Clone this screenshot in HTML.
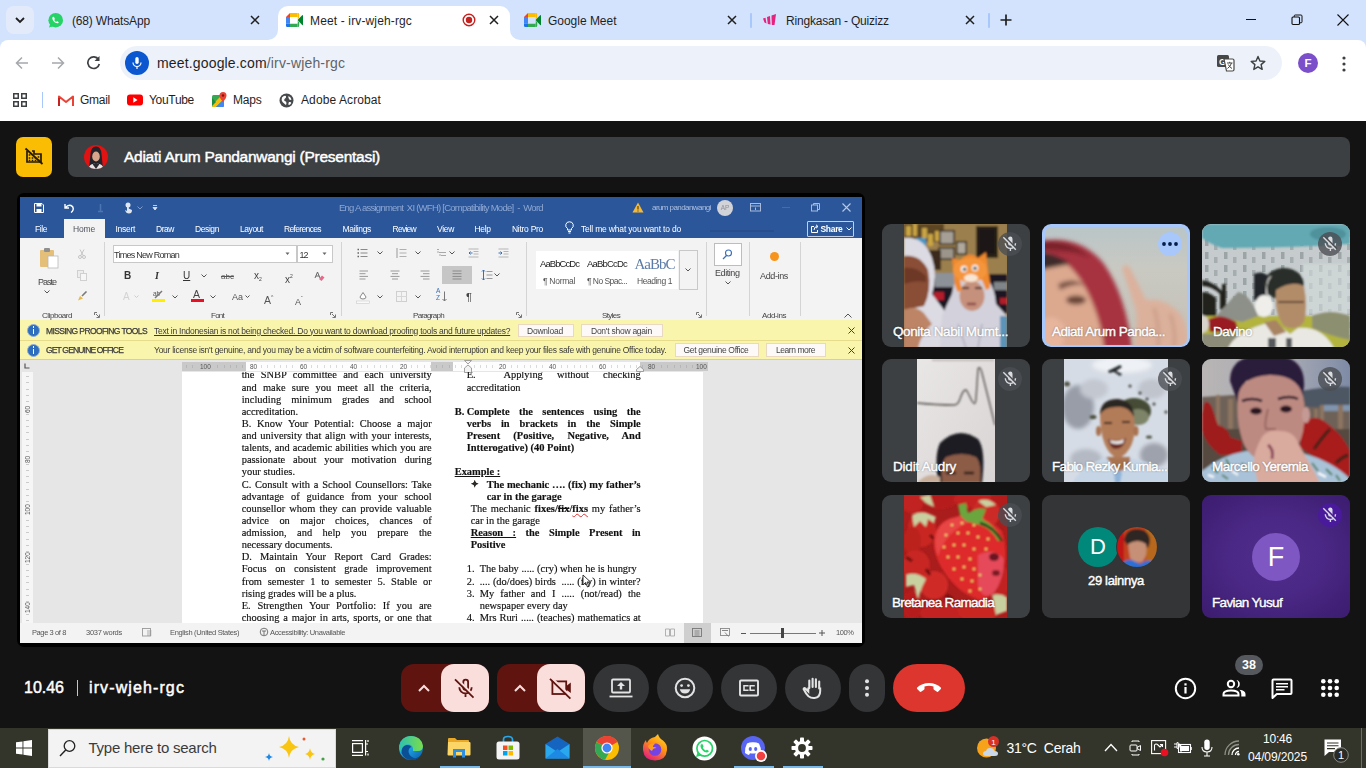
<!DOCTYPE html><html lang="id"><head>
<meta charset="utf-8">
<title>Meet - irv-wjeh-rgc</title>
<style>
*{box-sizing:border-box;margin:0;padding:0}
html,body{width:1366px;height:768px;overflow:hidden;background:#131314;font-family:"Liberation Sans",sans-serif;}
.abs{position:absolute}
#root{position:relative;width:1366px;height:768px;overflow:hidden;background:#131314}
/* ---------- chrome ---------- */
#tabstrip{left:0;top:0;width:1366px;height:52px;background:#d3e3fd}
#toolbar{left:0;top:40px;width:1366px;height:80.6px;background:#fff;border-radius:8px 8px 0 0}
.tabtxt{font-size:12px;color:#1f1f1f;white-space:nowrap;line-height:16px;margin-top:1px}
#omni{left:120px;top:46px;width:1162px;height:34px;border-radius:17px;background:#edf2fa}
.bm{font-size:12px;color:#1f1f1f;white-space:nowrap;line-height:16px;top:92px}
/* ---------- meet ---------- */
.gs{font-family:"Liberation Sans",sans-serif}
.tile{width:148px;height:123px;border-radius:9px;background:#3c4043;overflow:hidden}
.tname{left:11px;bottom:8px;color:#fff;-webkit-text-stroke:.4px #fff;font-size:13.5px;letter-spacing:-0.45px;white-space:nowrap;text-shadow:0 0 2px rgba(0,0,0,.6)}
svg{color:#4b4e52}
.mutedot{right:8px;top:8px;width:24px;height:24px;border-radius:12px;background:rgba(75,78,82,.8)}
.cbtn{top:664px;height:48px;background:#333537;border-radius:24px}
/* ---------- word ---------- */
#word{left:0;top:0;width:1366px;height:768px;clip-path:inset(197px 504px 125px 20px);font-family:"Liberation Sans",sans-serif;filter:blur(.5px)}
#word .abs{white-space:nowrap}
.wt{position:absolute;white-space:nowrap;color:#fff;font-size:8.5px;line-height:11px;margin-top:1px}
.rb{position:absolute;white-space:nowrap;color:#444;font-size:9px;line-height:10px}
.doc{position:absolute;font-family:"Liberation Serif",serif;font-size:10.45px;line-height:12.13px;-webkit-text-stroke:.15px #111;color:#111;text-align:justify;text-align-last:justify}
.doc div{height:12.13px;white-space:nowrap}
.doc div.l{text-align-last:left}
.doc .n{display:inline-block;width:13px;text-align:left;text-align-last:left}
/* ---------- taskbar ---------- */
#taskbar{left:0;top:728px;width:1366px;height:40px;background:#34352a}
</style>
</head>
<body>
<div id="root">

<!-- ================= CHROME ================= -->
<div id="tabstrip" class="abs"></div>
<div id="toolbar" class="abs"></div>
<!-- tab search button -->
<div class="abs" style="left:6px;top:6px;width:28px;height:28px;border-radius:8px;background:#e3ebfb"></div>
<svg class="abs" style="left:14px;top:15px" width="12" height="10" viewBox="0 0 12 10"><path d="M2 3 L6 7 L10 3" fill="none" stroke="#1f1f1f" stroke-width="1.8"></path></svg>
<!-- tab 1 whatsapp -->
<svg class="abs" style="left:47px;top:12px" width="17" height="17" viewBox="0 0 17 17"><circle cx="8.7" cy="8.2" r="7.3" fill="#25d366"></circle><path d="M2 15.5 L3.6 11 L7.5 14 Z" fill="#25d366"></path><path d="M6.3 4.8c-.4 0-1 .5-1 1.5 0 2 2.6 4.9 4.9 4.9 1 0 1.500-.6 1.500-1 0-.3-1.300-1-1.600-1-.3 0-.5.600-.8.600-.5 0-2-1.400-2-1.900 0-.3.500-.5.500-.9 0-.3-.6-2.200-1.500-2.200z" fill="#fff"></path></svg>
<div class="abs tabtxt" style="left: 72px; top: 12px; letter-spacing: -0.16px;">(68) WhatsApp</div>
<svg class="abs" style="left:250px;top:15px" width="10" height="10" viewBox="0 0 10 10"><path d="M1 1 L9 9 M9 1 L1 9" stroke="#1f1f1f" stroke-width="1.5"></path></svg>
<!-- active tab -->
<div class="abs" style="left:278px;top:6px;width:232px;height:34px;background:#fff;border-radius:10px 10px 0 0"></div>
<svg class="abs" style="left:268px;top:30px" width="10" height="10" viewBox="0 0 10 10"><path d="M10 0 V10 H0 A10 10 0 0 0 10 0Z" fill="#fff"></path></svg>
<svg class="abs" style="left:510px;top:30px" width="10" height="10" viewBox="0 0 10 10"><path d="M0 0 V10 H10 A10 10 0 0 1 0 0Z" fill="#fff"></path></svg>
<svg class="abs meeticon" style="left:286px;top:13px" width="17" height="14" viewBox="0 0 17 14"><path d="M0 4 L4 0 V4Z" fill="#ea4335"></path><rect x="4" y="0" width="7.500" height="4" fill="#fbbc04"></rect><rect x="0" y="4" width="4" height="6.500" fill="#4285f4"></rect><path d="M0 10.500 H4 V14 H1.200 A1.200 1.200 0 0 1 0 12.800Z" fill="#1a73e8"></path><rect x="4" y="10.500" width="7.500" height="3.500" fill="#34a853"></rect><path d="M11.500 0 H12 A1.200 1.200 0 0 1 13.200 1.200 V4.500 L11.500 7Z" fill="#fbbc04"></path><path d="M11.500 7 L16.200 2.200 Q17 1.800 17 2.800 V11.500 Q17 12.500 16.200 11.900 L11.500 7Z" fill="#00832d"></path><path d="M11.500 7 L13.200 9.500 V12.800 A1.200 1.200 0 0 1 12 14 H11.500Z" fill="#34a853"></path><rect x="4" y="4" width="7.500" height="6.500" fill="#fff"></rect></svg>
<div class="abs tabtxt" style="left: 310px; top: 12px; letter-spacing: 0.14px;">Meet - irv-wjeh-rgc</div>
<svg class="abs" style="left:462px;top:13px" width="14" height="14" viewBox="0 0 14 14"><circle cx="7" cy="7" r="5.800" fill="none" stroke="#c5221f" stroke-width="1.400"></circle><circle cx="7" cy="7" r="3.200" fill="#c5221f"></circle></svg>
<svg class="abs" style="left:489px;top:15px" width="10" height="10" viewBox="0 0 10 10"><path d="M1 1 L9 9 M9 1 L1 9" stroke="#1f1f1f" stroke-width="1.500"></path></svg>
<!-- tab 3 google meet -->
<svg class="abs meeticon" style="left:524px;top:13px" width="17" height="14" viewBox="0 0 17 14"><path d="M0 4 L4 0 V4Z" fill="#ea4335"></path><rect x="4" y="0" width="7.500" height="4" fill="#fbbc04"></rect><rect x="0" y="4" width="4" height="6.500" fill="#4285f4"></rect><path d="M0 10.500 H4 V14 H1.200 A1.200 1.200 0 0 1 0 12.800Z" fill="#1a73e8"></path><rect x="4" y="10.500" width="7.500" height="3.500" fill="#34a853"></rect><path d="M11.500 0 H12 A1.200 1.200 0 0 1 13.200 1.200 V4.500 L11.500 7Z" fill="#fbbc04"></path><path d="M11.500 7 L16.200 2.200 Q17 1.800 17 2.800 V11.500 Q17 12.500 16.200 11.900 L11.500 7Z" fill="#00832d"></path><path d="M11.500 7 L13.200 9.500 V12.800 A1.200 1.200 0 0 1 12 14 H11.500Z" fill="#34a853"></path><rect x="4" y="4" width="7.500" height="6.500" fill="#d3e3fd"></rect></svg>
<div class="abs tabtxt" style="left: 548px; top: 12px; letter-spacing: -0.02px;">Google Meet</div>
<svg class="abs" style="left:727px;top:15px" width="10" height="10" viewBox="0 0 10 10"><path d="M1 1 L9 9 M9 1 L1 9" stroke="#1f1f1f" stroke-width="1.500"></path></svg>
<div class="abs" style="left:750px;top:13px;width:2px;height:15px;background:#a8c7fa;border-radius:1px"></div>
<!-- tab 4 quizizz -->
<svg class="abs" style="left:762px;top:14px" width="15" height="12" viewBox="0 0 15 12"><path d="M1 4.500 L3.500 3.800 L4.500 9.500 L2.500 8.500Z M5 3 L8 2 L8.500 10.500 L5.800 10Z M9.500 1.500 L14 0 L12.500 11 L9.800 11Z" fill="#e5227d"></path></svg>
<div class="abs tabtxt" style="left: 786px; top: 12px; letter-spacing: -0.2px;">Ringkasan - Quizizz</div>
<svg class="abs" style="left:965px;top:15px" width="10" height="10" viewBox="0 0 10 10"><path d="M1 1 L9 9 M9 1 L1 9" stroke="#1f1f1f" stroke-width="1.500"></path></svg>
<div class="abs" style="left:988px;top:13px;width:2px;height:15px;background:#a8c7fa;border-radius:1px"></div>
<svg class="abs" style="left:1000px;top:14px" width="12" height="12" viewBox="0 0 12 12"><path d="M6 0.500 V11.500 M0.500 6 H11.500" stroke="#1f1f1f" stroke-width="1.700"></path></svg>
<!-- window controls -->
<div class="abs" style="left:1246px;top:19px;width:10px;height:1px;background:#111"></div>
<svg class="abs" style="left:1291px;top:14px" width="12" height="12" viewBox="0 0 12 12"><rect x="1" y="3" width="7.500" height="7.500" rx="1" fill="none" stroke="#111" stroke-width="1.100"></rect><path d="M3.200 3 V2 Q3.200 1 4.200 1 H10 Q11 1 11 2 V7.800 Q11 8.800 10 8.800 H8.500" fill="none" stroke="#111" stroke-width="1"></path></svg>
<svg class="abs" style="left:1337px;top:14px" width="12" height="12" viewBox="0 0 12 12"><path d="M0.500 0.500 L11.500 11.500 M11.500 0.500 L0.500 11.500" stroke="#111" stroke-width="1.100"></path></svg>

<!-- toolbar -->
<svg class="abs" style="left:15px;top:56px" width="14" height="14" viewBox="0 0 14 14"><path d="M13 7 H2 M7 1.500 L1.500 7 L7 12.500" fill="none" stroke="#a5a8ac" stroke-width="1.500"></path></svg>
<svg class="abs" style="left:51px;top:56px" width="14" height="14" viewBox="0 0 14 14"><path d="M1 7 H12 M7 1.500 L12.500 7 L7 12.500" fill="none" stroke="#a5a8ac" stroke-width="1.500"></path></svg>
<svg class="abs" style="left:86px;top:55px" width="15" height="15" viewBox="0 0 15 15"><path d="M12.500 4.500 A5.800 5.800 0 1 0 13.300 9" fill="none" stroke="#3c4043" stroke-width="1.700"></path><path d="M13.500 1 V6 H8.500Z" fill="#3c4043"></path></svg>
<div id="omni" class="abs"></div>
<div class="abs" style="left:125px;top:51px;width:24px;height:24px;border-radius:12px;background:#0b57d0"></div>
<svg class="abs" style="left:131px;top:56px" width="12" height="14" viewBox="0 0 12 14"><rect x="4.300" y="1" width="3.400" height="7" rx="1.700" fill="#fff"></rect><path d="M2 6.500 A4 4 0 0 0 10 6.500 M6 10.500 V13" fill="none" stroke="#fff" stroke-width="1.200"></path></svg>
<div class="abs" style="left: 157px; top: 54px; font-size: 14px; line-height: 18px; color: rgb(31, 31, 31); white-space: nowrap; letter-spacing: 0.16px;">meet.google.com<span style="color:#5f6368">/irv-wjeh-rgc</span></div>
<!-- translate icon -->
<svg class="abs" style="left:1217px;top:55px" width="18" height="17" viewBox="0 0 18 17"><rect x="0" y="0" width="12" height="12" rx="1.500" fill="#474747"></rect><text x="2" y="9.500" font-family="Liberation Sans,sans-serif" font-size="9" font-weight="bold" fill="#fff">G</text><path d="M7 4 H15.500 Q17 4 17 5.500 V14.500 Q17 16 15.500 16 H9.500 Z" fill="#fff" stroke="#474747" stroke-width="1.200"></path><path d="M10 8 H15.500 M12.700 6.800 V8 M14.500 8 Q13.500 11.500 10.500 13.500 M11.300 9.500 Q12.500 12 15 13.500" fill="none" stroke="#474747" stroke-width="1"></path></svg>
<svg class="abs" style="left:1250px;top:55px" width="16" height="16" viewBox="0 0 16 16"><path d="M8 1.500 L9.900 6 L14.800 6.400 L11.100 9.600 L12.200 14.400 L8 11.800 L3.800 14.400 L4.900 9.600 L1.200 6.400 L6.100 6Z" fill="none" stroke="#3c4043" stroke-width="1.400" stroke-linejoin="round"></path></svg>
<div class="abs" style="left:1298px;top:53px;width:20px;height:20px;border-radius:10px;background:#7b4fc9;color:#fff;font-size:11.500px;font-weight:bold;line-height:20.500px;text-align:center">F</div>
<svg class="abs" style="left:1342px;top:55.500px" width="4" height="16" viewBox="0 0 4 16"><circle cx="2" cy="2" r="1.600" fill="#3c4043"></circle><circle cx="2" cy="8" r="1.600" fill="#3c4043"></circle><circle cx="2" cy="14" r="1.600" fill="#3c4043"></circle></svg>

<!-- bookmarks bar -->
<svg class="abs" style="left:13px;top:93px" width="14" height="14" viewBox="0 0 14 14"><g fill="none" stroke="#3c4043" stroke-width="1.500"><rect x="0.750" y="0.750" width="4.500" height="4.500"></rect><rect x="8.750" y="0.750" width="4.500" height="4.500"></rect><rect x="0.750" y="8.750" width="4.500" height="4.500"></rect><rect x="8.750" y="8.750" width="4.500" height="4.500"></rect></g></svg>
<div class="abs" style="left:42px;top:92px;width:1px;height:16px;background:#a8c7fa"></div>
<svg class="abs" style="left:58px;top:95px" width="16" height="12" viewBox="0 0 16 12"><path d="M1 11 V1.500 L8 7 L15 1.500 V11" fill="none" stroke="#ea4335" stroke-width="2" stroke-linejoin="round"></path><path d="M1 11 V3" stroke="#c5221f" stroke-width="2"></path></svg>
<div class="abs bm" style="left: 80px; letter-spacing: -0.27px;">Gmail</div>
<svg class="abs" style="left:127px;top:94px" width="16" height="12" viewBox="0 0 16 12"><rect x="0" y="0.500" width="16" height="11" rx="3" fill="#ff0000"></rect><path d="M6.300 3.300 L10.500 6 L6.300 8.700Z" fill="#fff"></path></svg>
<div class="abs bm" style="left: 149px; letter-spacing: -0.31px;">YouTube</div>
<svg class="abs" style="left:212px;top:92px" width="15" height="16" viewBox="0 0 15 16"><rect x="0" y="3" width="12" height="12" rx="1.500" fill="#34a853"></rect><path d="M0 13 L9 4 L12 7 L4 15 H1.500 Q0 15 0 13.500Z" fill="#fbbc04"></path><path d="M4 15 L12 7 V13.500 Q12 15 10.500 15Z" fill="#4285f4"></path><path d="M0 6 L4 10 L0 14Z" fill="#1e8e3e"></path><path d="M11 0 A3.500 3.500 0 0 1 14.500 3.500 Q14.500 6 11 10 Q7.500 6 7.500 3.500 A3.500 3.500 0 0 1 11 0Z" fill="#ea4335"></path><circle cx="11" cy="3.500" r="1.200" fill="#7b1510"></circle></svg>
<div class="abs bm" style="left: 233px; letter-spacing: -0.21px;">Maps</div>
<svg class="abs" style="left:279px;top:93px" width="15" height="15" viewBox="0 0 15 15"><circle cx="7.500" cy="7.500" r="7" fill="#474a4d"></circle><path d="M3 4.500 Q5 2 7 3 Q7.500 5 5.500 6 Q4.500 8 7 8.500 Q8 10 7 12 Q5 10.500 3.500 9 Q2 7 3 4.500Z M9.500 3 Q12 4 12.500 6.500 Q11 7.500 10 6 Q9 4.500 9.500 3Z M10 9 Q12 8.500 12.300 10 Q11 12.500 9.500 12 Q9.200 10 10 9Z" fill="#fff"></path></svg>
<div class="abs bm" style="left: 301px; letter-spacing: 0.1px;">Adobe Acrobat</div>
<!--CHROME-DETAIL-END-->

<!-- ================= MEET ================= -->
<!-- top bar -->
<div class="abs" style="left:16px;top:137px;width:36px;height:40px;border-radius:7px;background:#fbbc04"></div>
<svg class="abs" style="left:24px;top:146px" width="20" height="20" viewBox="0 0 20 20"><path d="M3 5 V16 H16 M8 5 H10 V8 H17 V16" fill="none" stroke="#241a00" stroke-width="1.700"></path><path d="M5.500 9 V9.010 M5.500 12 V12.010 M8.500 12 V12.010 M8.500 14.500 V14.510 M5.500 14.500 V14.510 M11.500 12 V12.010 M11.500 14.500 V14.510 M14.500 11 V11.010 M14.500 14 V14.010" stroke="#241a00" stroke-width="1.600" stroke-linecap="square"></path><path d="M1.500 2.500 L18.500 18" stroke="#241a00" stroke-width="1.800"></path></svg>
<div class="abs" style="left:68px;top:137px;width:1282px;height:40px;border-radius:8px;background:#3c4043"></div>
<svg class="abs" style="left:84px;top:145px" width="24" height="24" viewBox="0 0 24 24"><defs><clipPath id="cpA"><circle cx="12" cy="12" r="12"></circle></clipPath></defs><g clip-path="url(#cpA)"><rect width="24" height="24" fill="#e01212"></rect><path d="M5 24 L6.500 9 Q7 1.500 12 1.500 Q17 1.500 17.500 9 L19 24Z" fill="#22232b"></path><ellipse cx="12" cy="11.500" rx="3.800" ry="5" fill="#d8a58a"></ellipse><path d="M4 24 Q6 18 12 19 Q18 18 20 24Z" fill="#e8e4e4"></path><path d="M8.500 19 L12 24 L15.500 19Z" fill="#2a2a30"></path></g></svg>
<div class="abs" style="left: 124px; top: 148px; font-size: 15.5px; -webkit-text-stroke: 0.45px rgb(255, 255, 255); color: rgb(255, 255, 255); line-height: 18px; white-space: nowrap; letter-spacing: -0.26px;">Adiati Arum Pandanwangi (Presentasi)</div>
<!--MEET-TOP-END-->
<div class="abs" style="left:17px;top:193px;width:848px;height:454px;border-radius:7px;background:#000"></div>
<div id="word" class="abs">
<div class="abs" style="left:20px;top:197px;width:842px;height:446px;background:#e6e6e6"></div>
<!-- title + tabs -->
<div class="abs" style="left:20px;top:197px;width:842px;height:41px;background:#2b579a"></div>
<!-- qat icons -->
<svg class="abs" style="left:34px;top:203px" width="10" height="10" viewBox="0 0 10 10"><path d="M0.500 0.500 H8 L9.500 2 V9.500 H0.500Z" fill="none" stroke="#fff" stroke-width="1"></path><rect x="2.500" y="0.500" width="5" height="3" fill="#fff"></rect><rect x="2.500" y="6" width="5" height="3.500" fill="#fff"></rect></svg>
<svg class="abs" style="left:64px;top:203px" width="11" height="10" viewBox="0 0 11 10"><path d="M1 1 V5 H5 M1.500 4.500 Q4 1.500 7 2.500 Q10 4 9 7 Q8.500 8.500 7 9.500" fill="none" stroke="#fff" stroke-width="1.400"></path></svg>
<svg class="abs" style="left:96px;top:203px" width="9" height="10" viewBox="0 0 9 10"><path d="M4.500 1 V8 M2 8.500 H7" stroke="#4d74b3" stroke-width="1.500"></path></svg>
<svg class="abs" style="left:124px;top:202px" width="9" height="12" viewBox="0 0 9 12"><circle cx="4" cy="3" r="2.500" fill="#dfe6f2"></circle><path d="M3 4 V9 L1 8 Q2 11.500 5 11.500 Q8 11.500 8 8 L4.800 6.500 V4Z" fill="#dfe6f2"></path></svg>
<svg class="abs" style="left:137px;top:206px" width="6" height="4" viewBox="0 0 6 4"><path d="M0.500 0.500 L3 3 L5.500 0.500" fill="none" stroke="#7f9bc9" stroke-width="1"></path></svg>
<svg class="abs" style="left:152px;top:205px" width="6" height="6" viewBox="0 0 6 6"><path d="M1 0.500 H5 M1 2.500 H5 L3 5Z" fill="#dfe6f2" stroke="#dfe6f2" stroke-width=".8"></path></svg>
<div class="abs" style="left: 339px; top: 202px; font-size: 9.5px; line-height: 12px; color: rgb(142, 166, 210); letter-spacing: -0.75px;">Eng A assignment&nbsp; XI (WFH) [Compatibility Mode]&nbsp; -&nbsp; Word</div>
<svg class="abs" style="left:632px;top:202px" width="12" height="11" viewBox="0 0 12 11"><path d="M6 0.500 L11.500 10.500 H0.500Z" fill="#f5b93a"></path><path d="M6 4 V7.500 M6 8.500 V9.500" stroke="#4a3a10" stroke-width="1.100"></path></svg>
<div class="abs" style="left: 652px; top: 203px; font-size: 8px; line-height: 10px; color: rgb(174, 191, 224); letter-spacing: -0.57px;">arum pandanwangi</div>
<div class="abs" style="left:717px;top:200px;width:16px;height:16px;border-radius:8px;background:#d2d3d8;color:#8c8f98;font-size:6.500px;line-height:16px;text-align:center">AP</div>
<svg class="abs" style="left:750px;top:203px" width="11" height="9" viewBox="0 0 11 9"><rect x="0.500" y="0.500" width="10" height="7.500" fill="none" stroke="#a9bbdc" stroke-width="1"></rect><path d="M0.500 3 H10.500 M5.500 4.500 V7" stroke="#a9bbdc" stroke-width="1"></path></svg>
<div class="abs" style="left:782px;top:207px;width:8px;height:1px;background:#476cab"></div>
<svg class="abs" style="left:811px;top:203px" width="9" height="9" viewBox="0 0 9 9"><rect x="0.500" y="2" width="6" height="6" fill="none" stroke="#a9bbdc" stroke-width="1"></rect><path d="M2.500 2 V0.500 H8.500 V6.500 H6.500" fill="none" stroke="#a9bbdc" stroke-width="1"></path></svg>
<svg class="abs" style="left:842px;top:203px" width="9" height="9" viewBox="0 0 9 9"><path d="M0.500 0.500 L8.500 8.500 M8.500 0.500 L0.500 8.500" stroke="#b9c8e3" stroke-width="1.100"></path></svg>
<!-- tabs -->
<div class="abs" style="left:64px;top:219px;width:41px;height:19px;background:#f3f3f3"></div>
<div class="abs wt" style="left: 35px; top: 223px; letter-spacing: -0.43px;">File</div>
<div class="abs wt" style="left: 73px; top: 223px; color: rgb(80, 85, 96); letter-spacing: -0.17px;">Home</div>
<div class="abs wt" style="left: 115.5px; top: 223px; letter-spacing: -0.29px;">Insert</div>
<div class="abs wt" style="left: 156px; top: 223px; letter-spacing: -0.46px;">Draw</div>
<div class="abs wt" style="left: 195px; top: 223px; letter-spacing: -0.41px;">Design</div>
<div class="abs wt" style="left: 240px; top: 223px; letter-spacing: -0.42px;">Layout</div>
<div class="abs wt" style="left: 284px; top: 223px; letter-spacing: -0.65px;">References</div>
<div class="abs wt" style="left: 342.5px; top: 223px; letter-spacing: -0.34px;">Mailings</div>
<div class="abs wt" style="left: 392.5px; top: 223px; letter-spacing: -0.73px;">Review</div>
<div class="abs wt" style="left: 437px; top: 223px; letter-spacing: -0.32px;">View</div>
<div class="abs wt" style="left: 474.5px; top: 223px; letter-spacing: -0.37px;">Help</div>
<div class="abs wt" style="left: 512px; top: 223px; letter-spacing: -0.28px;">Nitro Pro</div>
<svg class="abs" style="left:565px;top:221px" width="9" height="13" viewBox="0 0 9 13"><path d="M4.500 0.800 A3.600 3.600 0 0 1 6.500 7.500 V9 H2.500 V7.500 A3.600 3.600 0 0 1 4.500 0.800Z" fill="none" stroke="#fff" stroke-width="1"></path><path d="M3 10.500 H6 M3.500 12 H5.500" stroke="#fff" stroke-width="1"></path></svg>
<div class="abs wt" style="left: 581px; top: 223px; letter-spacing: -0.18px;">Tell me what you want to do</div>
<div class="abs" style="left:710px;top:230px;width:64px;height:2px;background:#274f8e"></div>
<div class="abs" style="left:807px;top:220.500px;width:47px;height:16.500px;border:1px solid #c2cfe6;border-radius:1px"></div>
<svg class="abs" style="left:811px;top:224px" width="8" height="9" viewBox="0 0 8 9"><path d="M3 2.500 H0.500 V8.500 H6.500 V6" fill="none" stroke="#fff" stroke-width="1"></path><path d="M3 6 Q3 2.500 6.500 2.500 M5 0.800 L7 2.500 L5 4.200" fill="none" stroke="#fff" stroke-width="1"></path></svg>
<div class="abs wt" style="left: 820.5px; top: 223px; font-weight: bold; letter-spacing: -0.32px;">Share</div>
<svg class="abs" style="left:846px;top:227px" width="6" height="4" viewBox="0 0 6 4"><path d="M0.500 0.500 L3 3 L5.500 0.500" fill="none" stroke="#fff" stroke-width="1"></path></svg>
<!--W-TITLE-END-->
<!-- ribbon -->
<div class="abs" style="left:20px;top:238px;width:842px;height:82px;background:#f3f3f3"></div>
<!-- separators -->
<div class="abs" style="left:104px;top:242px;width:1px;height:74px;background:#d4d4d4"></div>
<div class="abs" style="left:341px;top:242px;width:1px;height:74px;background:#d4d4d4"></div>
<div class="abs" style="left:526px;top:242px;width:1px;height:74px;background:#d4d4d4"></div>
<div class="abs" style="left:706px;top:242px;width:1px;height:74px;background:#d4d4d4"></div>
<div class="abs" style="left:749px;top:242px;width:1px;height:74px;background:#d4d4d4"></div>
<div class="abs" style="left:800px;top:242px;width:1px;height:74px;background:#d4d4d4"></div>
<!-- clipboard -->
<svg class="abs" style="left:39px;top:247px" width="20" height="23" viewBox="0 0 20 23"><rect x="1" y="3" width="14" height="17" rx="1" fill="#e3bf7a"></rect><rect x="5" y="1" width="6" height="4" rx="1" fill="#8f8f8f"></rect><rect x="9" y="9" width="10" height="12" fill="#fff" stroke="#b9b9b9" stroke-width=".8"></rect></svg>
<div class="abs rb" style="left: 38px; top: 277px; letter-spacing: -1px;">Paste</div>
<svg class="abs" style="left:44px;top:290px" width="6" height="4" viewBox="0 0 6 4"><path d="M0.500 0.500 L3 3 L5.500 0.500" fill="none" stroke="#555" stroke-width="1"></path></svg>
<svg class="abs" style="left:78px;top:249px" width="8" height="10" viewBox="0 0 8 10"><path d="M2 0.500 L5.500 7 M6 0.500 L2.500 7" stroke="#c4c4c4" stroke-width="1"></path><circle cx="2" cy="8" r="1.500" fill="none" stroke="#c4c4c4"></circle><circle cx="6" cy="8" r="1.500" fill="none" stroke="#c4c4c4"></circle></svg>
<svg class="abs" style="left:77px;top:270px" width="10" height="11" viewBox="0 0 10 11"><rect x="0.500" y="0.500" width="6" height="7" fill="#ededed" stroke="#d0d0d0"></rect><rect x="3.500" y="3.500" width="6" height="7" fill="#f6f6f6" stroke="#d0d0d0"></rect></svg>
<svg class="abs" style="left:77px;top:291px" width="11" height="11" viewBox="0 0 11 11"><path d="M9.500 0.500 L5 5" stroke="#7a7a7a" stroke-width="1.600"></path><path d="M1 9.500 L3 5 L6 7.500Z" fill="#e8b84a"></path></svg>
<div class="abs rb" style="left: 42px; top: 310.8px; font-size: 8px; letter-spacing: -0.47px;">Clipboard</div>
<svg class="abs" style="left:94px;top:312px" width="6" height="6" viewBox="0 0 6 6"><path d="M0.500 3 V0.500 H3 M2 2 L5 5 M5.500 2.500 V5.500 H2.500" fill="none" stroke="#666" stroke-width=".9"></path></svg>
<!-- font group -->
<div class="abs" style="left:113px;top:245px;width:184px;height:18px;background:#fff;border:1px solid #c8c8c8"></div>
<div class="abs" style="left:297px;top:245px;width:36px;height:18px;background:#fff;border:1px solid #c8c8c8"></div>
<div class="abs rb" style="left: 114px; top: 249.7px; color: rgb(51, 51, 51); font-size: 9px; letter-spacing: -0.75px;">Times New Roman</div>
<svg class="abs" style="left:285px;top:252px" width="5" height="4" viewBox="0 0 5 4"><path d="M0.500 0.500 H4.500 L2.500 3Z" fill="#666"></path></svg>
<div class="abs rb" style="left: 299.5px; top: 249.7px; color: rgb(51, 51, 51); font-size: 9px; letter-spacing: -1.01px;">12</div>
<svg class="abs" style="left:322px;top:252px" width="5" height="4" viewBox="0 0 5 4"><path d="M0.500 0.500 H4.500 L2.500 3Z" fill="#666"></path></svg>
<div class="abs rb" style="left:124px;top:271.3px;font-size:10px;font-weight:bold;color:#333">B</div>
<div class="abs rb" style="left:155px;top:271.3px;font-size:10px;font-style:italic;font-family:'Liberation Serif',serif;color:#333;font-weight:bold">I</div>
<div class="abs rb" style="left:183px;top:271.3px;font-size:10px;text-decoration:underline;color:#333">U</div>
<svg class="abs" style="left:201px;top:274.3px" width="6" height="4" viewBox="0 0 6 4"><path d="M0.500 0.500 L3 3 L5.500 0.500" fill="none" stroke="#555" stroke-width="1"></path></svg>
<div class="abs rb" style="left:221px;top:272.3px;font-size:8px;text-decoration:line-through;color:#555">abc</div>
<div class="abs rb" style="left:254px;top:271.3px;font-size:10px;color:#444">x<span style="font-size:5px;vertical-align:-2px">2</span></div>
<div class="abs rb" style="left:285px;top:271.3px;font-size:10px;color:#444">x<span style="font-size:5px;vertical-align:5px">2</span></div>
<svg class="abs" style="left:314px;top:271.3px" width="11" height="11" viewBox="0 0 11 11"><path d="M1 7 L3.500 1 L6 7 M2 5 H5" fill="none" stroke="#666" stroke-width="1"></path><path d="M5 8 L8 4.500 L10.500 6.500 L7.500 10Z" fill="#e46a8c"></path></svg>
<div class="abs rb" style="left:123px;top:292px;font-size:10px;color:#d3d3d3">A</div>
<svg class="abs" style="left:134px;top:295px" width="5" height="4" viewBox="0 0 5 4"><path d="M0.500 0.500 L2.500 2.500 L4.500 0.500" fill="none" stroke="#ccc" stroke-width="1"></path></svg>
<div class="abs rb" style="left:153px;top:289px;font-size:6.500px;color:#555">ab</div>
<svg class="abs" style="left:153px;top:290px" width="11" height="10" viewBox="0 0 11 10"><path d="M2 8 L9 1" stroke="#777" stroke-width="1.400"></path></svg>
<div class="abs" style="left:151.500px;top:299px;width:13px;height:3px;background:#ffee00"></div>
<svg class="abs" style="left:172px;top:295px" width="6" height="4" viewBox="0 0 6 4"><path d="M0.500 0.500 L3 3 L5.500 0.500" fill="none" stroke="#555" stroke-width="1"></path></svg>
<div class="abs rb" style="left:193px;top:289px;font-size:10.500px;color:#444">A</div>
<div class="abs" style="left:190.500px;top:299px;width:13px;height:3px;background:#e81123"></div>
<svg class="abs" style="left:210px;top:295px" width="6" height="4" viewBox="0 0 6 4"><path d="M0.500 0.500 L3 3 L5.500 0.500" fill="none" stroke="#555" stroke-width="1"></path></svg>
<div class="abs rb" style="left:232px;top:292px;font-size:9px;color:#555">Aa</div>
<svg class="abs" style="left:245px;top:295px" width="5" height="4" viewBox="0 0 5 4"><path d="M0.500 0.500 L2.500 2.500 L4.500 0.500" fill="none" stroke="#555" stroke-width="1"></path></svg>
<div class="abs rb" style="left:264px;top:292px;font-size:10.500px;color:#555">A<span style="font-size:5px;vertical-align:5px">^</span></div>
<div class="abs rb" style="left:295px;top:293px;font-size:9px;color:#555">A<span style="font-size:5px;vertical-align:5px">ˇ</span></div>
<div class="abs rb" style="left: 211px; top: 310.8px; font-size: 8px; letter-spacing: -0.75px;">Font</div>
<svg class="abs" style="left:330px;top:312px" width="6" height="6" viewBox="0 0 6 6"><path d="M0.500 3 V0.500 H3 M2 2 L5 5 M5.500 2.500 V5.500 H2.500" fill="none" stroke="#666" stroke-width=".9"></path></svg>
<!-- paragraph group -->
<svg class="abs" style="left:357px;top:248px" width="11" height="10" viewBox="0 0 11 10"><path d="M3.500 1.500 H10.500 M3.500 5 H10.500 M3.500 8.500 H10.500" stroke="#8a8a8a" stroke-width="1"></path><path d="M0.500 1.500 H2 M0.500 5 H2 M0.500 8.500 H2" stroke="#666" stroke-width="1.500"></path></svg>
<svg class="abs" style="left:377px;top:251px" width="6" height="4" viewBox="0 0 6 4"><path d="M0.500 0.500 L3 3 L5.500 0.500" fill="none" stroke="#555" stroke-width="1"></path></svg>
<svg class="abs" style="left:396px;top:248px" width="11" height="10" viewBox="0 0 11 10"><path d="M3.500 1.500 H10.500 M3.500 5 H10.500 M3.500 8.500 H10.500" stroke="#b0b0b0" stroke-width="1"></path><path d="M1 0 V10" stroke="#999" stroke-width="1"></path></svg>
<svg class="abs" style="left:415px;top:251px" width="6" height="4" viewBox="0 0 6 4"><path d="M0.500 0.500 L3 3 L5.500 0.500" fill="none" stroke="#555" stroke-width="1"></path></svg>
<svg class="abs" style="left:436px;top:248px" width="11" height="10" viewBox="0 0 11 10"><path d="M1 1.500 H3 M3 4.500 H10 M5 7.500 H10" stroke="#a8a8a8" stroke-width="1"></path><path d="M2 3 V5 M4 6 V8" stroke="#aaa" stroke-width="1"></path></svg>
<svg class="abs" style="left:449px;top:251px" width="6" height="4" viewBox="0 0 6 4"><path d="M0.500 0.500 L3 3 L5.500 0.500" fill="none" stroke="#555" stroke-width="1"></path></svg>
<svg class="abs" style="left:468px;top:248px" width="11" height="10" viewBox="0 0 11 10"><path d="M0.500 1 H10.500 M5.500 3.500 H10.500 M5.500 6 H10.500 M0.500 9 H10.500" stroke="#b5b5b5" stroke-width="1"></path><path d="M4.500 5 H1 M2.500 3.500 L1 5 L2.500 6.500" stroke="#3a6fb7" stroke-width="1" fill="none"></path></svg>
<svg class="abs" style="left:498px;top:248px" width="11" height="10" viewBox="0 0 11 10"><path d="M0.500 1 H10.500 M5.500 3.500 H10.500 M5.500 6 H10.500 M0.500 9 H10.500" stroke="#b5b5b5" stroke-width="1"></path><path d="M0.500 5 H4 M2.500 3.500 L4 5 L2.500 6.500" stroke="#3a6fb7" stroke-width="1" fill="none"></path></svg>
<svg class="abs" style="left:359px;top:270px" width="10" height="10" viewBox="0 0 10 10"><path d="M0.500 1 H9 M0.500 3.700 H6.500 M0.500 6.400 H9 M0.500 9 H6.500" stroke="#999" stroke-width="1"></path></svg>
<svg class="abs" style="left:390px;top:270px" width="10" height="10" viewBox="0 0 10 10"><path d="M0.500 1 H9.500 M2 3.700 H8 M0.500 6.400 H9.500 M2 9 H8" stroke="#999" stroke-width="1"></path></svg>
<svg class="abs" style="left:420px;top:270px" width="10" height="10" viewBox="0 0 10 10"><path d="M0.500 1 H9.500 M3 3.700 H9.500 M0.500 6.400 H9.500 M3 9 H9.500" stroke="#999" stroke-width="1"></path></svg>
<div class="abs" style="left:442px;top:266px;width:30px;height:18px;background:#c6c6c6"></div>
<svg class="abs" style="left:452px;top:270px" width="10" height="10" viewBox="0 0 10 10"><path d="M0.500 1 H9.500 M0.500 3.700 H9.500 M0.500 6.400 H9.500 M0.500 9 H9.500" stroke="#8a8a8a" stroke-width="1"></path></svg>
<svg class="abs" style="left:481px;top:269px" width="12" height="12" viewBox="0 0 12 12"><path d="M5.500 2.500 H11.500 M5.500 6 H11.500 M5.500 9.500 H11.500" stroke="#999" stroke-width="1"></path><path d="M2.500 1 V11 M1 2.500 L2.500 1 L4 2.500 M1 9.500 L2.500 11 L4 9.500" fill="none" stroke="#3a6fb7" stroke-width="1"></path></svg>
<svg class="abs" style="left:494px;top:273px" width="6" height="4" viewBox="0 0 6 4"><path d="M0.500 0.500 L3 3 L5.500 0.500" fill="none" stroke="#555" stroke-width="1"></path></svg>
<svg class="abs" style="left:356px;top:290px" width="14" height="14" viewBox="0 0 14 14"><path d="M4 7 L7 2.500 L10 7 Q10 9 7 9 Q4 9 4 7Z" fill="#fff" stroke="#888" stroke-width="1"></path><rect x="0.500" y="11" width="13" height="2.500" fill="#f9f9f9" stroke="#ccc" stroke-width=".6"></rect></svg>
<svg class="abs" style="left:377px;top:295px" width="6" height="4" viewBox="0 0 6 4"><path d="M0.500 0.500 L3 3 L5.500 0.500" fill="none" stroke="#555" stroke-width="1"></path></svg>
<svg class="abs" style="left:396px;top:291px" width="11" height="11" viewBox="0 0 11 11"><rect x="0.500" y="0.500" width="10" height="10" fill="none" stroke="#cfcfcf" stroke-width="1"></rect><path d="M5.500 0.500 V10.500 M0.500 5.500 H10.500" stroke="#d6d6d6" stroke-width="1"></path></svg>
<svg class="abs" style="left:415px;top:295px" width="6" height="4" viewBox="0 0 6 4"><path d="M0.500 0.500 L3 3 L5.500 0.500" fill="none" stroke="#555" stroke-width="1"></path></svg>
<div class="abs rb" style="left:436px;top:288px;font-size:6.500px;color:#3a6fb7;line-height:6.500px">A<br>Z</div>
<svg class="abs" style="left:442px;top:291px" width="5" height="11" viewBox="0 0 5 11"><path d="M2.500 0.500 V10 M0.500 8 L2.500 10 L4.500 8" fill="none" stroke="#777" stroke-width="1"></path></svg>
<div class="abs rb" style="left:466px;top:291px;font-size:11px;color:#444;line-height:12px">¶</div>
<div class="abs rb" style="left: 413px; top: 310.8px; font-size: 8px; letter-spacing: -0.71px;">Paragraph</div>
<svg class="abs" style="left:516px;top:312px" width="6" height="6" viewBox="0 0 6 6"><path d="M0.500 3 V0.500 H3 M2 2 L5 5 M5.500 2.500 V5.500 H2.500" fill="none" stroke="#666" stroke-width=".9"></path></svg>
<!-- styles -->
<div class="abs" style="left:536px;top:251px;width:142px;height:38px;background:#fff"></div>
<div class="abs rb" style="left: 540px; top: 259px; font-size: 9.5px; color: rgb(34, 34, 34); letter-spacing: -0.93px;">AaBbCcDc</div>
<div class="abs rb" style="left: 543px; top: 276px; font-size: 8.5px; color: rgb(85, 85, 85); letter-spacing: -0.29px;">¶ Normal</div>
<div class="abs rb" style="left: 587px; top: 259px; font-size: 9.5px; color: rgb(34, 34, 34); letter-spacing: -0.81px;">AaBbCcDc</div>
<div class="abs rb" style="left: 587px; top: 276px; font-size: 8.5px; color: rgb(85, 85, 85); letter-spacing: -0.55px;">¶ No Spac...</div>
<div class="abs rb" style="left: 634.5px; top: 256px; font-size: 15px; line-height: 16px; color: rgb(91, 123, 168); font-family: &quot;Liberation Serif&quot;, serif; letter-spacing: -1px;">AaBbC</div>
<div class="abs rb" style="left: 637px; top: 276px; font-size: 8.5px; color: rgb(85, 85, 85); letter-spacing: -0.42px;">Heading 1</div>
<div class="abs" style="left:679px;top:250px;width:18.500px;height:40px;border:1px solid #c8c8c8;background:#f3f3f3"></div>
<svg class="abs" style="left:685px;top:268px" width="6" height="4" viewBox="0 0 6 4"><path d="M0.500 0.500 L3 3 L5.500 0.500" fill="none" stroke="#555" stroke-width="1"></path></svg>
<div class="abs rb" style="left: 602px; top: 310.8px; font-size: 8px; letter-spacing: -0.63px;">Styles</div>
<svg class="abs" style="left:696px;top:312px" width="6" height="6" viewBox="0 0 6 6"><path d="M0.500 3 V0.500 H3 M2 2 L5 5 M5.500 2.500 V5.500 H2.500" fill="none" stroke="#666" stroke-width=".9"></path></svg>
<!-- editing -->
<div class="abs" style="left:714px;top:242.500px;width:27.500px;height:23px;background:#fff;border:1px solid #bdbdbd"></div>
<svg class="abs" style="left:722px;top:249px" width="11" height="11" viewBox="0 0 11 11"><circle cx="6.500" cy="4" r="3" fill="none" stroke="#3a6fb7" stroke-width="1.100"></circle><path d="M4.500 6.500 L1 10" stroke="#3a6fb7" stroke-width="1.300"></path></svg>
<div class="abs rb" style="left: 715px; top: 268px; font-size: 9px; letter-spacing: -0.43px;">Editing</div>
<svg class="abs" style="left:724.500px;top:281px" width="6" height="4" viewBox="0 0 6 4"><path d="M0.500 0.500 L3 3 L5.500 0.500" fill="none" stroke="#555" stroke-width="1"></path></svg>
<!-- add-ins -->
<div class="abs" style="left:769.500px;top:252px;width:9px;height:9px;border-radius:5px;background:#f7941d"></div>
<div class="abs rb" style="left: 760px; top: 271px; font-size: 9px; letter-spacing: -0.36px;">Add-ins</div>
<div class="abs rb" style="left: 762px; top: 310.8px; font-size: 8px; letter-spacing: -0.45px;">Add-ins</div>
<svg class="abs" style="left:844px;top:313px" width="8" height="5" viewBox="0 0 8 5"><path d="M0.500 4.500 L4 1 L7.500 4.500" fill="none" stroke="#555" stroke-width="1"></path></svg>
<!--W-RIBBON-END-->
<!-- yellow bars -->
<div class="abs" style="left:20px;top:320px;width:842px;height:40px;background:#faf5ad"></div>
<div class="abs" style="left:20px;top:339.500px;width:842px;height:1px;background:#e6dc8c"></div>
<div class="abs" style="left:20px;top:359px;width:842px;height:1px;background:#d9d28c"></div>
<div class="abs" style="left:26.500px;top:323.500px;width:13px;height:13px;border-radius:7px;background:#2f6dbd;border:1px solid #8fb0de"></div>
<div class="abs" style="left:32.500px;top:326px;width:1.500px;height:1.500px;background:#fff"></div><div class="abs" style="left:32.500px;top:328.500px;width:1.500px;height:5px;background:#fff"></div>
<div class="abs" style="left:26.500px;top:343.500px;width:13px;height:13px;border-radius:7px;background:#2f6dbd;border:1px solid #8fb0de"></div>
<div class="abs" style="left:32.500px;top:346px;width:1.500px;height:1.500px;background:#fff"></div><div class="abs" style="left:32.500px;top:348.500px;width:1.500px;height:5px;background:#fff"></div>
<div class="abs rb" style="left: 46px; top: 325.5px; font-size: 8.5px; color: rgb(58, 58, 58); -webkit-text-stroke: 0.25px rgb(58, 58, 58); letter-spacing: -0.61px;">MISSING PROOFING TOOLS</div>
<div class="abs rb" style="left: 154px; top: 325.5px; font-size: 8.5px; color: rgb(58, 58, 58); text-decoration: underline; letter-spacing: -0.24px;">Text in Indonesian is not being checked. Do you want to download proofing tools and future updates?</div>
<div class="abs" style="left:517.500px;top:323.500px;width:56.500px;height:13.500px;background:#fdf9f9;border:1px solid #e9d9c0"></div>
<div class="abs rb" style="left: 527px; top: 325.5px; font-size: 8.5px; color: rgb(68, 68, 68); letter-spacing: -0.23px;">Download</div>
<div class="abs" style="left:581px;top:323.500px;width:81.500px;height:13.500px;background:#fdf9f9;border:1px solid #e9d9c0"></div>
<div class="abs rb" style="left: 591px; top: 325.5px; font-size: 8.5px; color: rgb(68, 68, 68); letter-spacing: -0.25px;">Don't show again</div>
<svg class="abs" style="left:848px;top:327px" width="7" height="7" viewBox="0 0 7 7"><path d="M0.500 0.500 L6.500 6.500 M6.500 0.500 L0.500 6.500" stroke="#444" stroke-width="1"></path></svg>
<div class="abs rb" style="left: 46px; top: 345px; font-size: 8.5px; color: rgb(58, 58, 58); -webkit-text-stroke: 0.25px rgb(58, 58, 58); letter-spacing: -0.83px;">GET GENUINE OFFICE</div>
<div class="abs rb" style="left: 154px; top: 345px; font-size: 8.5px; color: rgb(58, 58, 58); letter-spacing: -0.26px;">Your license isn't genuine, and you may be a victim of software counterfeiting. Avoid interruption and keep your files safe with genuine Office today.</div>
<div class="abs" style="left:674.500px;top:343px;width:84.500px;height:13.500px;background:#fdf9f9;border:1px solid #e9d9c0"></div>
<div class="abs rb" style="left: 683.5px; top: 345px; font-size: 8.5px; color: rgb(68, 68, 68); letter-spacing: -0.32px;">Get genuine Office</div>
<div class="abs" style="left:766px;top:343px;width:60px;height:13.500px;background:#fdf9f9;border:1px solid #e9d9c0"></div>
<div class="abs rb" style="left: 776px; top: 345px; font-size: 8.5px; color: rgb(68, 68, 68); letter-spacing: -0.45px;">Learn more</div>
<svg class="abs" style="left:848px;top:346.500px" width="7" height="7" viewBox="0 0 7 7"><path d="M0.500 0.500 L6.500 6.500 M6.500 0.500 L0.500 6.500" stroke="#444" stroke-width="1"></path></svg>
<!--W-BARS-END-->
<!-- doc -->
<!-- doc bg -->
<div class="abs" style="left:20px;top:360px;width:842px;height:263px;background:#e6e6e6"></div>
<div class="abs" style="left:182px;top:372px;width:521px;height:251px;background:#fff"></div>
<!-- h ruler -->
<div class="abs" style="left:182px;top:362px;width:525px;height:9px;background:#fdfdfd"></div>
<div class="abs" style="left:182px;top:362px;width:64px;height:9px;background:#c9c9c9"></div>
<div class="abs" style="left:431px;top:362px;width:22px;height:9px;background:#c9c9c9"></div>
<div class="abs" style="left:640px;top:362px;width:67px;height:9px;background:#c9c9c9"></div>
<div class="abs" style="left:182px;top:365px;width:525px;height:3px;background:repeating-linear-gradient(90deg,transparent 0 4.200px,#8a8a8a 4.200px 5.200px,transparent 5.200px 6.250px);opacity:.3"></div>
<div class="abs rb" style="left:199px;top:362px;font-size:6.500px;line-height:9px;color:#555;background:#c9c9c9;padding:0 1px">100</div>
<div class="abs rb" style="left:249px;top:362px;font-size:6.500px;line-height:9px;color:#555;background:#fdfdfd;padding:0 1px">80</div>
<div class="abs rb" style="left:299px;top:362px;font-size:6.500px;line-height:9px;color:#555;background:#fdfdfd;padding:0 1px">60</div>
<div class="abs rb" style="left:349px;top:362px;font-size:6.500px;line-height:9px;color:#555;background:#fdfdfd;padding:0 1px">40</div>
<div class="abs rb" style="left:399px;top:362px;font-size:6.500px;line-height:9px;color:#555;background:#fdfdfd;padding:0 1px">20</div>
<div class="abs rb" style="left:498px;top:362px;font-size:6.500px;line-height:9px;color:#555;background:#fdfdfd;padding:0 1px">20</div>
<div class="abs rb" style="left:548px;top:362px;font-size:6.500px;line-height:9px;color:#555;background:#fdfdfd;padding:0 1px">40</div>
<div class="abs rb" style="left:598px;top:362px;font-size:6.500px;line-height:9px;color:#555;background:#fdfdfd;padding:0 1px">60</div>
<div class="abs rb" style="left:647px;top:362px;font-size:6.500px;line-height:9px;color:#555;background:#c9c9c9;padding:0 1px">80</div>
<div class="abs rb" style="left:695px;top:362px;font-size:6.500px;line-height:9px;color:#555;background:#c9c9c9;padding:0 1px">100</div>
<svg class="abs" style="left:464px;top:360px" width="8" height="13" viewBox="0 0 8 13"><path d="M0.500 0.500 H7.500 L4 4Z M4 5 L7.500 8 V12.500 H0.500 V8Z" fill="#f3f3f3" stroke="#8a8a8a" stroke-width=".8"></path></svg>
<svg class="abs" style="left:636px;top:366px" width="8" height="6" viewBox="0 0 8 6"><path d="M4 0.500 L7.500 3.500 V5.500 H0.500 V3.500Z" fill="#f3f3f3" stroke="#8a8a8a" stroke-width=".8"></path></svg>
<svg class="abs" style="left:24px;top:363px" width="6" height="6" viewBox="0 0 6 6"><path d="M1 0.500 V5 H5.500" fill="none" stroke="#555" stroke-width="1.200"></path></svg>
<!-- v ruler -->
<div class="abs" style="left:22px;top:372px;width:11px;height:251px;background:#f6f6f6"></div>
<div class="abs" style="left:26px;top:372px;width:3px;height:251px;background:repeating-linear-gradient(180deg,transparent 0 4.200px,#8a8a8a 4.200px 5.200px,transparent 5.200px 6.250px);opacity:.4"></div>
<div class="abs rb" style="left:23px;top:404px;font-size:6.500px;line-height:9px;color:#555;background:#f6f6f6;transform:rotate(-90deg);transform-origin:4.500px 4.500px">60</div>
<div class="abs rb" style="left:23px;top:454px;font-size:6.500px;line-height:9px;color:#555;background:#f6f6f6;transform:rotate(-90deg);transform-origin:4.500px 4.500px">80</div>
<div class="abs rb" style="left:23px;top:506px;font-size:6.500px;line-height:9px;color:#555;background:#f6f6f6;transform:rotate(-90deg);transform-origin:4.500px 4.500px">100</div>
<div class="abs rb" style="left:23px;top:554px;font-size:6.500px;line-height:9px;color:#555;background:#f6f6f6;transform:rotate(-90deg);transform-origin:4.500px 4.500px">120</div>
<div class="abs rb" style="left:23px;top:604px;font-size:6.500px;line-height:9px;color:#555;background:#f6f6f6;transform:rotate(-90deg);transform-origin:4.500px 4.500px">140</div>
<!-- text clip area -->
<div class="abs" style="left:182px;top:372px;width:521px;height:251px;overflow:hidden">
<div class="doc" style="left:59.700px;top:-2.600px;width:190px">
<div>the SNBP committee and each university</div>
<div>and make sure you meet all the criteria,</div>
<div>including minimum grades and school</div>
<div class="l">accreditation.</div>
<div>B. Know Your Potential: Choose a major</div>
<div>and university that align with your interests,</div>
<div>talents, and academic abilities which you are</div>
<div>passionate about your motivation during</div>
<div class="l">your studies.</div>
<div>C. Consult with a School Counsellors: Take</div>
<div>advantage of guidance from your school</div>
<div>counsellor whom they can provide valuable</div>
<div>advice on major choices, chances of</div>
<div>admission, and help you prepare the</div>
<div class="l">necessary documents.</div>
<div>D. Maintain Your Report Card Grades:</div>
<div>Focus on consistent grade improvement</div>
<div>from semester 1 to semester 5. Stable or</div>
<div class="l">rising grades will be a plus.</div>
<div>E. Strengthen Your Portfolio: If you are</div>
<div>choosing a major in arts, sports, or one that</div>
</div>
<div class="doc" style="left:272.700px;top:-2.600px;width:186px">
<div style="padding-left:12px">E.&nbsp; Applying without checking</div>
<div class="l" style="padding-left:12px">accreditation</div>
<div class="l">&nbsp;</div>
<div style="font-weight:bold"><span class="n" style="width:12px">B.</span>Complete the sentences using the</div>
<div style="font-weight:bold;padding-left:12px">verbs in brackets in the Simple</div>
<div style="font-weight:bold;padding-left:12px">Present (Positive, Negative, And</div>
<div class="l" style="font-weight:bold;padding-left:12px">Intterogative) (40 Point)</div>
<div class="l">&nbsp;</div>
<div class="l" style="font-weight:bold"><span style="text-decoration:underline">Example :</span></div>
<div style="font-weight:bold;padding-left:32px;position:relative"><span style="position:absolute;left:16px;top:-1px;color:#33302a;font-size:9px">✦</span>The mechanic …. (fix) my father’s</div>
<div class="l" style="font-weight:bold;padding-left:32px">car in the garage</div>
<div style="padding-left:16px">The mechanic <b>fixes/<span style="text-decoration:line-through">fix</span>/<span style="text-decoration:underline wavy #d33;text-decoration-thickness:.6px">fixs</span></b> my father’s</div>
<div class="l" style="padding-left:16px">car in the garage</div>
<div style="font-weight:bold;padding-left:16px"><span style="text-decoration:underline">Reason&nbsp;:</span> the Simple Present in</div>
<div class="l" style="font-weight:bold;padding-left:16px">Positive</div>
<div class="l">&nbsp;</div>
<div class="l" style="padding-left:12px"><span class="n">1.</span>The baby ..... (cry) when he is hungry</div>
<div style="padding-left:12px"><span class="n">2.</span>.... (do/does) birds&nbsp; ..... (fly) in winter?</div>
<div style="padding-left:12px"><span class="n">3.</span>My father and I ..... (not/read) the</div>
<div class="l" style="padding-left:25px">newspaper every day</div>
<div style="padding-left:12px"><span class="n">4.</span>Mrs Ruri ..... (teaches) mathematics at</div>
</div>
</div>
<!-- mouse cursor -->
<svg class="abs" style="left:582px;top:574px" width="10" height="14" viewBox="0 0 10 14"><path d="M1 1 V11 L3.500 8.500 L5.500 13 L7 12.300 L5 8 H8.500Z" fill="#fff" stroke="#222" stroke-width=".9"></path></svg>
<!--W-DOC-END-->
<!-- status -->
<div class="abs" style="left:20px;top:623px;width:842px;height:20px;background:#f3f3f3"></div>
<div class="abs rb" style="left: 32px; top: 628px; font-size: 7.5px; color: rgb(85, 85, 85); letter-spacing: -0.4px;">Page 3 of 8</div>
<div class="abs rb" style="left: 86px; top: 628px; font-size: 7.5px; color: rgb(85, 85, 85); letter-spacing: -0.28px;">3037 words</div>
<svg class="abs" style="left:142px;top:628px" width="10" height="9" viewBox="0 0 10 9"><rect x="0.500" y="0.500" width="8" height="7.500" fill="none" stroke="#999" stroke-width=".9"></rect><path d="M5 3 H9.500 M5 5 H9.500 M5 7 H9.500" stroke="#999" stroke-width=".8"></path></svg>
<div class="abs rb" style="left: 170px; top: 628px; font-size: 7.5px; color: rgb(85, 85, 85); letter-spacing: -0.33px;">English (United States)</div>
<svg class="abs" style="left:259px;top:627px" width="10" height="10" viewBox="0 0 10 10"><circle cx="5" cy="5" r="3.800" fill="none" stroke="#666" stroke-width=".9"></circle><path d="M3 4 H7 M5 4 V8" stroke="#666" stroke-width=".9"></path></svg>
<div class="abs rb" style="left: 270px; top: 628px; font-size: 7.5px; color: rgb(85, 85, 85); letter-spacing: -0.35px;">Accessibility: Unavailable</div>
<svg class="abs" style="left:665px;top:628px" width="10" height="9" viewBox="0 0 10 9"><path d="M0.500 1 H4.500 V8 H0.500Z M5.500 1 H9.500 V8 H5.500Z" fill="none" stroke="#aaa" stroke-width=".9"></path></svg>
<div class="abs" style="left:684px;top:623px;width:27px;height:20px;background:#cfcfcf"></div>
<svg class="abs" style="left:692px;top:628px" width="10" height="9" viewBox="0 0 10 9"><rect x="0.500" y="0.500" width="9" height="8" fill="none" stroke="#777" stroke-width=".9"></rect><path d="M2.500 3 H7.500 M2.500 5 H7.500 M2.500 7 H7.500" stroke="#777" stroke-width=".8"></path></svg>
<svg class="abs" style="left:720px;top:628px" width="10" height="9" viewBox="0 0 10 9"><rect x="0.500" y="0.500" width="9" height="7" fill="none" stroke="#888" stroke-width=".9"></rect><path d="M2 2.500 H8 M5 4.500 L8.500 8.500" stroke="#777" stroke-width=".9"></path></svg>
<div class="abs" style="left:741px;top:632.500px;width:5px;height:1px;background:#555"></div>
<div class="abs" style="left:750px;top:632.500px;width:66px;height:1px;background:#777"></div>
<div class="abs" style="left:780.500px;top:628px;width:3px;height:10px;background:#444"></div>
<svg class="abs" style="left:819px;top:630px" width="6" height="6" viewBox="0 0 6 6"><path d="M0 3 H6 M3 0 V6" stroke="#555" stroke-width="1"></path></svg>
<div class="abs rb" style="left: 836px; top: 628px; font-size: 7.5px; color: rgb(85, 85, 85); letter-spacing: -0.42px;">100%</div>
<!--W-STATUS-END-->
</div>
<!--PRESENT-END-->
<svg width="0" height="0" style="position:absolute"><defs>
<filter id="b1" x="-10%" y="-10%" width="120%" height="120%"><feGaussianBlur stdDeviation="0.9"></feGaussianBlur></filter>
<filter id="b2" x="-20%" y="-20%" width="140%" height="140%"><feGaussianBlur stdDeviation="2.2"></feGaussianBlur></filter>
<symbol id="micoff" viewBox="0 0 24 24"><rect x="10.100" y="4.600" width="4.400" height="9" rx="2.200" fill="#dadce0"></rect><path d="M7.300 11.300 A5.100 5.100 0 0 0 17.500 11.300 M12.400 16.400 V19" fill="none" stroke="#dadce0" stroke-width="1.400"></path><path d="M6.300 4.300 L18.800 16.800" stroke="currentColor" stroke-width="1.800"></path><path d="M5.300 5.300 L17.800 17.800" stroke="#dadce0" stroke-width="1.400"></path></symbol>
</defs></svg>

<!-- tile 1 Qonita -->
<div class="abs tile" style="left:882px;top:224px">
<svg class="abs" style="left:22px;top:0" width="103" height="124" viewBox="22 0 103 124">
<rect x="22" y="0" width="103" height="124" fill="#927748"></rect>
<g filter="url(#b1)">
<rect x="22" y="0" width="103" height="60" fill="#9b7f4e"></rect>
<rect x="22" y="0" width="40" height="18" fill="#5b4524"></rect>
<path d="M24 2 h5 v10 h-5z M31 0 h4 v12 h-4z M40 4 h5 v10 h-5z M46 10 h5 v12 h-5z M53 7 h4 v10 h-4z" fill="#c9a545"></path>
<rect x="34" y="14" width="10" height="10" fill="#4c94c0"></rect>
<rect x="57" y="6" width="16" height="15" fill="#2a2218"></rect><rect x="58.500" y="7.500" width="13" height="12" fill="#a59f96"></rect>
<rect x="74" y="17" width="11" height="14" fill="#2a2218"></rect><rect x="75.500" y="18.500" width="8" height="11" fill="#b0a89c"></rect>
<rect x="56" y="23" width="17" height="13" fill="#2a2218"></rect><rect x="57.500" y="24.500" width="14" height="10" fill="#9c958b"></rect>
<rect x="94" y="2" width="22" height="32" fill="#2b2118"></rect><rect x="97" y="5" width="16" height="25" fill="#1c1814"></rect>
<rect x="45" y="26" width="14" height="20" fill="#3a2c1f"></rect>
<rect x="50" y="50" width="75" height="40" fill="#1b1922"></rect>
<rect x="53" y="49" width="22" height="14" fill="#8c9298"></rect><rect x="112" y="58" width="13" height="8" fill="#7f8588"></rect>
<rect x="52" y="68" width="10" height="8" fill="#b41f2b"></rect><rect x="118" y="74" width="7" height="6" fill="#b41f2b"></rect>
<!-- left person -->
<path d="M22 14 Q42 12 50 34 Q56 52 50 70 L62 86 L62 124 L22 124Z" fill="#dcdae2"></path>
<path d="M22 32 Q38 30 46 46 Q50 66 42 82 L22 86Z" fill="#8a4d35"></path>
<path d="M22 44 Q34 42 44 52 L44 58 Q32 56 22 60Z" fill="#6d3826"></path>
<path d="M22 86 Q36 80 44 92 L50 100 Q40 108 36 124 L22 124Z" fill="#bd8566"></path>
<!-- right person -->
<path d="M90 48 Q112 50 114 80 L125 92 V124 H58 L60 92 Q66 78 70 70 Q72 50 90 48Z" fill="#d3d2dc"></path>
<path d="M76 100 L84 124 M100 100 L96 124" stroke="#b7b6c4" stroke-width="2" fill="none"></path>
<ellipse cx="90" cy="72" rx="12.500" ry="15" fill="#c6917b"></ellipse>
<path d="M80 64 h7 M93 64 h7" stroke="#3b2620" stroke-width="2"></path>
<path d="M85 80 h9" stroke="#8d4a48" stroke-width="2.500"></path>
<rect x="118" y="92" width="7" height="32" fill="#5b93b8"></rect>
<!-- cat -->
<path d="M70 34 L72 52 Q72 62 76 68 L80 66 L78 56 H100 L104 66 L108 64 Q108 52 106 48 L104 28 L96 34 Q88 26 78 36Z" fill="#f0892f"></path>
<ellipse cx="88" cy="46" rx="17" ry="12" fill="#f4953a"></ellipse>
<ellipse cx="89" cy="54" rx="7" ry="4" fill="#f7e6d4"></ellipse>
<circle cx="82" cy="45" r="3.200" fill="#fff"></circle><circle cx="93" cy="44" r="3.200" fill="#fff"></circle><circle cx="82.500" cy="45.200" r="1.700" fill="#20180f"></circle><circle cx="93" cy="44.300" r="1.700" fill="#20180f"></circle>
</g></svg>
<div class="abs mutedot"></div><svg class="abs" style="right:8.500px;top:8px" width="24" height="24"><use href="#micoff"></use></svg>
<div class="abs tname" style="letter-spacing: -0.4px;">Qonita Nabil Mumt...</div>
</div>

<!-- tile 2 Adiati -->
<div class="abs tile" style="left:1042px;top:224px;background:#a8c7fa">
<svg class="abs" style="left:3px;top:3px;border-radius:7px" width="142" height="118" viewBox="3 3 142 118">
<defs><linearGradient id="wallA" x1="0" y1="0" x2="0" y2="1"><stop offset="0" stop-color="#b9c5c7"></stop><stop offset=".35" stop-color="#c9c9c2"></stop><stop offset="1" stop-color="#c4c0b6"></stop></linearGradient></defs>
<rect x="3" y="3" width="142" height="118" fill="url(#wallA)"></rect>
<g filter="url(#b2)">
<path d="M-2 17 Q38 10 62 40 Q84 72 90 124 L60 124 Q56 84 40 60 Q24 36 -2 34Z" fill="#a7333f"></path>
<path d="M-2 18 Q30 14 50 36 Q40 26 -2 26Z" fill="#7a2029"></path>
<path d="M-2 28 Q22 30 40 58 Q58 88 62 124 L-2 124Z" fill="#dca98f"></path>
<path d="M-2 28 Q16 30 28 40 L-2 46Z" fill="#3c2b2b"></path>
<path d="M16 60 Q30 52 44 62 Q34 58 18 66Z" fill="#7a5244"></path>
<ellipse cx="34" cy="76" rx="10" ry="4.500" fill="#6a4537"></ellipse>
<path d="M0 96 Q14 88 24 104 L20 124 L-2 124Z" fill="#e6b59c"></path>
<path d="M80 44 Q84 38 88 44 L104 76 Q120 74 132 84 Q146 92 146 124 L92 124 Q96 100 94 86Z" fill="#dcb19c"></path>
<path d="M112 84 Q118 100 116 124 M128 90 Q134 104 132 124" stroke="#c49680" stroke-width="2.500" fill="none"></path>
</g></svg>
<div class="abs" style="right:8px;top:8px;width:24px;height:24px;border-radius:12px;background:#a8c7fa"></div>
<svg class="abs" style="right:12px;top:18px" width="16" height="4" viewBox="0 0 16 4"><circle cx="2" cy="2" r="1.900" fill="#041e49"></circle><circle cx="8" cy="2" r="1.900" fill="#041e49"></circle><circle cx="14" cy="2" r="1.900" fill="#041e49"></circle></svg>
<div class="abs tname" style="left: 10px; letter-spacing: -0.5px;">Adiati Arum Panda...</div>
</div>

<!-- tile 3 Davino -->
<div class="abs tile" style="left:1202px;top:224px">
<svg class="abs" style="left:0;top:0" width="148" height="124" viewBox="0 0 148 124">
<defs><pattern id="tl" width="19" height="13" patternUnits="userSpaceOnUse"><rect width="19" height="13" fill="#c6cccd"></rect><rect x="3" y="2" width="3.500" height="7" fill="#9ca4a6"></rect><rect x="12" y="7" width="3.500" height="6" fill="#a5adaf"></rect></pattern></defs>
<rect width="148" height="124" fill="url(#tl)"></rect>
<g filter="url(#b1)">
<path d="M0 0 H148 V20 Q80 24 20 24 Q8 20 0 14Z" fill="#62a9b3"></path>
<ellipse cx="126" cy="10" rx="18" ry="7" fill="#4f929c"></ellipse>
<rect x="100" y="40" width="48" height="50" fill="#d4dadb" opacity=".6"></rect>
<path d="M0 92 H148 V124 H0Z" fill="#b3b43c"></path>
<path d="M0 56 Q14 58 24 72 V84 L18 86 V70 Q10 62 0 62Z M0 68 Q8 68 14 74 V92 H0Z" fill="#23221f"></path>
<path d="M20 60 h4 v24 h-4z" fill="#23221f"></path>
<path d="M14 92 L36 68 Q48 70 56 92 L40 98Z" fill="#8d9088"></path>
<path d="M6 96 Q18 88 34 98 L36 108 L8 108Z" fill="#9a1c22"></path>
<path d="M110 92 Q128 84 148 92 V116 Q128 112 110 104Z" fill="#8d9070"></path>
<path d="M0 110 H40 L30 124 H0Z" fill="#8c8c78"></path>
<ellipse cx="0" cy="100" rx="7" ry="9" fill="#d8d2cc"></ellipse>
<!-- person -->
<path d="M52 50 Q60 46 66 52 L66 80 L52 76Z" fill="#23262a"></path>
<ellipse cx="82" cy="60" rx="20" ry="16" fill="#2a2f2c"></ellipse>
<path d="M74 66 Q90 56 102 62 Q106 84 102 98 Q94 108 82 102 Q72 90 74 66Z" fill="#b28c69"></path>
<path d="M64 70 Q64 52 70 52 Q60 60 70 88Z" fill="#f0efec"></path>
<ellipse cx="62" cy="82" rx="9" ry="11" fill="#efeeea"></ellipse>
<path d="M76 78 H102" stroke="#4c3424" stroke-width="1.600"></path>
<path d="M62 100 Q68 94 76 100 L88 110 L96 104 Q120 102 132 124 H26 Q34 108 62 100Z" fill="#e9e8e2"></path>
<path d="M62 98 L72 112 L84 108 L74 96Z" fill="#a88462"></path>
<path d="M66 114 h8 v10 h-8z M84 114 h6 v10 h-6z" fill="#565a5c"></path>
</g></svg>
<div class="abs mutedot"></div><svg class="abs" style="right:8.500px;top:8px" width="24" height="24"><use href="#micoff"></use></svg>
<div class="abs tname" style="letter-spacing: -0.51px;">Davino</div>
</div>

<!-- tile 4 Didit -->
<div class="abs tile" style="left:882px;top:359px">
<svg class="abs" style="left:35px;top:0" width="78" height="124" viewBox="35 0 78 124">
<defs><linearGradient id="wallD" x1="0" y1="0" x2="1" y2="1"><stop offset="0" stop-color="#e9e6e6"></stop><stop offset="1" stop-color="#d9d4d4"></stop></linearGradient></defs>
<rect x="35" y="0" width="78" height="124" fill="url(#wallD)"></rect>
<g filter="url(#b1)">
<path d="M50 0 H112 V2 H50Z" fill="#bfb9b4"></path>
<path d="M35 44 Q55 46 72 46 Q76 46 78 40 Q82 28 85 32 Q88 38 90 42 Q93 48 94 40 L96 10 Q98 6 100 14 L113 66" fill="none" stroke="#5a5652" stroke-width="1.400"></path>
<path d="M56 124 Q52 96 58 84 Q76 66 96 80 Q104 90 100 124Z" fill="#1f1e22"></path>
<path d="M60 124 Q58 104 64 98 Q80 92 94 98 Q100 104 98 124Z" fill="#8c5c47"></path>
<path d="M64 114 h10 M82 114 h10" stroke="#2c1c18" stroke-width="2.500"></path>
<path d="M35 124 Q46 112 58 118 L58 124Z" fill="#c9b09c"></path>
</g></svg>
<div class="abs mutedot"></div><svg class="abs" style="right:8.500px;top:8px" width="24" height="24"><use href="#micoff"></use></svg>
<div class="abs tname" style="letter-spacing: -0.21px;">Didit Audry</div>
</div>

<!-- tile 5 Fabio -->
<div class="abs tile" style="left:1042px;top:359px">
<svg class="abs" style="left:22px;top:0" width="104" height="124" viewBox="22 0 104 124">
<rect x="22" y="0" width="104" height="124" fill="#d6dce5"></rect>
<g filter="url(#b2)">
<ellipse cx="36" cy="48" rx="16" ry="22" fill="#989da8"></ellipse>
<ellipse cx="52" cy="30" rx="14" ry="10" fill="#c2c7d0"></ellipse>
<ellipse cx="110" cy="30" rx="14" ry="10" fill="#bfc4cd"></ellipse>
<ellipse cx="112" cy="96" rx="14" ry="12" fill="#9ea2ac"></ellipse>
<ellipse cx="44" cy="100" rx="16" ry="10" fill="#b4b9c3"></ellipse>
<ellipse cx="80" cy="6" rx="30" ry="8" fill="#eef1f5"></ellipse>
</g>
<g filter="url(#b1)">
<path d="M66 12 L78 6 L80 8 L74 12 L80 15 L78 17 L72 13 L67 14Z" fill="#23252a"></path>
<ellipse cx="92" cy="52" rx="17" ry="13" fill="#454c34"></ellipse><ellipse cx="96" cy="58" rx="11" ry="8" fill="#7e8468"></ellipse>
<ellipse cx="51" cy="58" rx="3.500" ry="2" fill="#4a4f3c"></ellipse><ellipse cx="25" cy="25" rx="3" ry="2.500" fill="#55594a"></ellipse><ellipse cx="107" cy="78" rx="3" ry="1.500" fill="#4a4f3c"></ellipse>
<circle cx="88" cy="27" r="1.500" fill="#3a3d38"></circle><circle cx="98" cy="34" r="1.500" fill="#3a3d38"></circle><circle cx="105" cy="40" r="1.500" fill="#3a3d38"></circle><circle cx="112" cy="45" r="1.500" fill="#3a3d38"></circle><circle cx="124" cy="53" r="1.500" fill="#3a3d38"></circle>
<path d="M30 124 Q40 106 66 98 L84 98 Q112 104 126 112 V124Z" fill="#c5d5e6"></path>
<path d="M64 98 H88 V106 L76 114Z" fill="#a97350"></path>
<path d="M72 114 L76 110 L80 114 L78 124 H73Z" fill="#8fb4d8"></path>
<path d="M58 54 Q60 42 76 42 Q92 44 92 58 Q96 90 76 100 Q58 92 58 54Z" fill="#b27b59"></path>
<path d="M58 56 Q58 40 76 40 Q92 42 92 58 Q86 46 74 48 Q62 48 58 56Z" fill="#2a2622"></path>
<ellipse cx="56.500" cy="72" rx="2.500" ry="5" fill="#a8714f"></ellipse><ellipse cx="94" cy="72" rx="2.500" ry="5" fill="#a8714f"></ellipse>
<path d="M62 64 h8 M80 63 h8" stroke="#2c1a12" stroke-width="2"></path>
<path d="M66 80 Q76 84 84 79 Q82 90 74 90 Q68 90 66 80Z" fill="#6c2e28"></path><path d="M68 81 Q76 84 82 80 L81 84 Q75 86 69 84Z" fill="#eee"></path>
</g></svg>
<div class="abs mutedot"></div><svg class="abs" style="right:8.500px;top:8px" width="24" height="24"><use href="#micoff"></use></svg>
<div class="abs tname" style="left: 10px; letter-spacing: -0.67px;">Fabio Rezky Kurnia...</div>
</div>

<!-- tile 6 Marcello -->
<div class="abs tile" style="left:1202px;top:359px">
<svg class="abs" style="left:0;top:0" width="148" height="124" viewBox="0 0 148 124">
<defs><linearGradient id="skyM" x1="0" y1="0" x2="1" y2="0"><stop offset="0" stop-color="#b9b5b4"></stop><stop offset=".6" stop-color="#a7a9b4"></stop><stop offset="1" stop-color="#7e8ba6"></stop></linearGradient></defs>
<rect width="148" height="124" fill="url(#skyM)"></rect>
<g filter="url(#b1)">
<path d="M0 38 Q60 34 100 32 Q130 28 148 28 V124 H0Z" fill="#6e6259"></path>
<path d="M100 32 Q130 26 148 28 V48 H104Z" fill="#4d5664"></path>
<path d="M120 46 H148 V52 H122Z" fill="#8094ae"></path>
<path d="M14 36 h4 v30 h-4z M26 40 h5 v30 h-5z M112 50 h4 v20 h-4z M118 46 h4 v24 h-4z M136 46 h5 v30 h-5z" fill="#8c7461"></path>
<path d="M0 70 H148 V124 H0Z" fill="#54483f"></path>
<!-- spiderman -->
<path d="M2 44 Q6 40 10 48 L16 66 Q26 68 28 78 L40 82 L40 96 L18 96 Q2 84 0 70 V56Z" fill="#9f1b1c"></path>
<path d="M100 66 Q110 54 122 62 Q140 74 148 92 V118 Q128 110 112 98 L98 88Z" fill="#a81d1d"></path>
<path d="M112 90 Q122 76 128 70 M134 104 Q140 98 146 96" stroke="#3a2018" stroke-width="3" fill="none"></path>
<!-- shirt -->
<path d="M0 112 Q20 96 44 92 L100 94 Q130 102 148 120 V124 H0Z" fill="#a9c2d8"></path>
<path d="M10 108 l6 6 M24 100 l4 8 M40 104 l6 8 M110 104 l6 8 M124 110 l6 6 M20 116 l6 4 M134 116 l4 6" stroke="#4d7a5a" stroke-width="2"></path>
<path d="M6 116 l6 2 M30 112 l6 4 M116 114 l8 4" stroke="#fff" stroke-width="2"></path>
<!-- head -->
<path d="M28 22 Q28 -6 68 -4 Q104 -4 102 28 L100 40 Q84 14 44 22 L36 44Z" fill="#2b1c3a"></path>
<path d="M36 40 Q36 18 68 16 Q100 16 102 44 Q104 74 96 86 Q84 104 66 104 Q46 100 40 80 Q34 60 36 40Z" fill="#bd8a82"></path>
<ellipse cx="104" cy="56" rx="4" ry="8" fill="#c59a94"></ellipse>
<path d="M40 42 Q50 38 60 42 M76 40 Q88 36 96 40" stroke="#2a1828" stroke-width="2.500" fill="none"></path>
<ellipse cx="54" cy="52" rx="6" ry="3.500" fill="#2a1620"></ellipse><ellipse cx="84" cy="50" rx="6" ry="3.500" fill="#2a1620"></ellipse>
<path d="M66 50 Q62 66 64 70 L74 70" stroke="#9a6660" stroke-width="2" fill="none"></path>
<!-- hand -->
<path d="M60 78 Q66 70 78 72 Q92 72 96 84 L112 112 L118 124 H56 L52 108 Q50 96 60 78Z" fill="#d9aa9e"></path>
<path d="M66 86 Q72 90 70 100" stroke="#8a4a5a" stroke-width="3" fill="none"></path>
</g></svg>
<div class="abs mutedot"></div><svg class="abs" style="right:8.500px;top:8px" width="24" height="24"><use href="#micoff"></use></svg>
<div class="abs tname" style="left: 10px; letter-spacing: -0.47px;">Marcello Yeremia</div>
</div>

<!-- tile 7 Bretanea -->
<div class="abs tile" style="left:882px;top:495px">
<svg class="abs" style="left:22px;top:0" width="103" height="124" viewBox="22 0 103 124">
<rect x="22" y="0" width="103" height="124" fill="#a91d1c"></rect>
<g filter="url(#b1)">
<ellipse cx="30" cy="6" rx="12" ry="12" fill="#c12220"></ellipse><ellipse cx="58" cy="4" rx="18" ry="10" fill="#b71f1e"></ellipse><ellipse cx="92" cy="4" rx="20" ry="9" fill="#c52422"></ellipse><ellipse cx="118" cy="6" rx="10" ry="12" fill="#b41c1c"></ellipse>
<ellipse cx="40" cy="34" rx="14" ry="18" fill="#c92624"></ellipse><ellipse cx="30" cy="46" rx="9" ry="14" fill="#bb201f"></ellipse>
<ellipse cx="104" cy="18" rx="14" ry="14" fill="#cc2a28"></ellipse>
<ellipse cx="34" cy="70" rx="14" ry="15" fill="#c72523"></ellipse><ellipse cx="52" cy="90" rx="14" ry="14" fill="#d02a28"></ellipse>
<ellipse cx="30" cy="110" rx="10" ry="14" fill="#b71e1d"></ellipse><ellipse cx="60" cy="118" rx="22" ry="10" fill="#c32321"></ellipse>
<ellipse cx="96" cy="116" rx="20" ry="12" fill="#c92624"></ellipse><ellipse cx="118" cy="86" rx="10" ry="16" fill="#c02120"></ellipse>
<path d="M48 40 L52 44 M24 62 l6 4 M44 74 l4 6 M64 100 l6 4 M110 40 l6 8" stroke="#6a0f10" stroke-width="3"></path>
<path d="M30 20 Q40 14 54 22 L52 28 L46 24 L44 32 L38 26 L32 32Z M38 2 L48 0 L52 12 L44 8Z M96 6 Q106 2 114 10 L104 12Z M24 80 Q34 76 44 84 L40 92 L36 104 L32 90 L24 92Z M110 100 Q118 98 125 102 V116 L114 120Z" fill="#c9d0a0"></path>
<!-- big strawberry -->
<path d="M74 22 Q96 14 120 36 Q128 60 118 86 Q110 106 96 104 Q74 98 58 70 Q48 50 54 36 Q60 24 74 22Z" fill="#de2c2c"></path>
<path d="M74 22 Q90 16 104 24 Q84 24 68 40 Q58 52 56 62 Q50 46 56 34 Q62 24 74 22Z" fill="#e84444"></path>
<path d="M96 60 Q112 52 122 64 Q122 84 112 98 Q100 106 96 90Z" fill="#e5485a"></path>
<ellipse cx="112" cy="62" rx="5" ry="4" fill="#6a1820"></ellipse><ellipse cx="114" cy="78" rx="4" ry="3" fill="#7a1a20"></ellipse>
<g fill="#e8d670"><circle cx="70" cy="30" r="1.300"></circle><circle cx="80" cy="28" r="1.300"></circle><circle cx="92" cy="30" r="1.300"></circle><circle cx="64" cy="40" r="1.300"></circle><circle cx="76" cy="38" r="1.300"></circle><circle cx="86" cy="38" r="1.300"></circle><circle cx="96" cy="42" r="1.300"></circle><circle cx="106" cy="44" r="1.300"></circle><circle cx="62" cy="52" r="1.300"></circle><circle cx="72" cy="50" r="1.300"></circle><circle cx="82" cy="50" r="1.300"></circle><circle cx="92" cy="54" r="1.300"></circle><circle cx="104" cy="54" r="1.300"></circle><circle cx="66" cy="62" r="1.300"></circle><circle cx="76" cy="62" r="1.300"></circle><circle cx="88" cy="64" r="1.300"></circle><circle cx="72" cy="74" r="1.300"></circle><circle cx="82" cy="72" r="1.300"></circle><circle cx="92" cy="74" r="1.300"></circle><circle cx="80" cy="84" r="1.300"></circle><circle cx="90" cy="86" r="1.300"></circle><circle cx="98" cy="80" r="1.300"></circle><circle cx="88" cy="96" r="1.300"></circle><circle cx="98" cy="94" r="1.300"></circle></g>
<path d="M76 10 L84 8 L86 18 Q96 12 104 14 L100 24 Q112 30 120 44 L116 46 Q110 34 98 30 L84 26 L78 20Z" fill="#6aa63c"></path>
<path d="M98 28 Q112 32 120 46" stroke="#1f3a14" stroke-width="2.500" fill="none"></path>
</g></svg>
<div class="abs mutedot"></div><svg class="abs" style="right:8.500px;top:8px" width="24" height="24"><use href="#micoff"></use></svg>
<div class="abs tname" style="left: 10px; letter-spacing: -0.66px;">Bretanea Ramadia</div>
</div>

<!-- tile 8 others -->
<div class="abs tile" style="left:1042px;top:495px;background:#333537">
<div class="abs" style="left:36px;top:32px;width:40px;height:40px;border-radius:20px;background:#00897b;color:#fff;font-size:22px;line-height:40px;text-align:center">D</div>
<svg class="abs" style="left:74px;top:31px" width="42" height="42" viewBox="0 0 42 42"><defs><clipPath id="cpR"><circle cx="21" cy="21" r="20"></circle></clipPath></defs><circle cx="21" cy="21" r="21" fill="#333537"></circle><g clip-path="url(#cpR)" filter="url(#b1)"><rect width="42" height="42" fill="#c2421c"></rect><rect x="0" y="0" width="8" height="42" fill="#c01818"></rect><rect x="30" y="0" width="12" height="42" fill="#b8681c"></rect><path d="M8 14 Q10 2 22 3 Q34 4 34 16 L32 22 Q22 10 12 20Z" fill="#2d2620"></path><path d="M12 18 Q22 12 30 18 Q32 30 26 36 Q18 38 14 32Z" fill="#c69076"></path><path d="M4 42 Q8 32 16 34 L24 38 Q32 32 38 36 L42 42Z" fill="#2b6fd6"></path></g></svg>
<div class="abs" style="left: 46px; top: 78px; color: rgb(255, 255, 255); -webkit-text-stroke: 0.4px rgb(255, 255, 255); font-size: 13px; line-height: 16px; white-space: nowrap; letter-spacing: -0.33px;">29 lainnya</div>
</div>

<!-- tile 9 Favian -->
<div class="abs tile" style="left:1202px;top:495px;background:radial-gradient(ellipse at 50% 50%,#502d8c 0%,#4a2885 45%,#3b1c6e 100%)">
<div class="abs" style="left:50px;top:38px;width:48px;height:48px;border-radius:24px;background:#7e57c2;color:#fff;font-size:27px;line-height:48px;text-align:center">F</div>
<div class="abs mutedot" style="background:#4a1a9c"></div><svg class="abs" style="right:8.500px;top:8px;color:#4a1a9c" width="24" height="24"><use href="#micoff"></use></svg>
<div class="abs tname" style="left: 10px; letter-spacing: -0.65px;">Favian Yusuf</div>
</div>
<!--TILES-END-->
<!-- bottom left -->
<div class="abs" style="left: 24px; top: 678px; font-size: 16px; -webkit-text-stroke: 0.45px rgb(255, 255, 255); color: rgb(255, 255, 255); line-height: 20px; white-space: nowrap; letter-spacing: -0.01px;">10.46</div>
<div class="abs" style="left:77px;top:680px;width:1px;height:16px;background:#c4c7c5"></div>
<div class="abs" style="left: 89px; top: 678px; font-size: 16px; -webkit-text-stroke: 0.45px rgb(255, 255, 255); color: rgb(255, 255, 255); line-height: 20px; white-space: nowrap; letter-spacing: 1.11px;">irv-wjeh-rgc</div>
<!-- mic group -->
<div class="abs" style="left:401px;top:664px;width:88px;height:48px;border-radius:13px;background:#601410"></div>
<div class="abs" style="left:441px;top:664px;width:48px;height:48px;border-radius:13px;background:#f9dedc"></div>
<svg class="abs" style="left:418px;top:684px" width="12" height="8" viewBox="0 0 12 8"><path d="M1 7 L6 2 L11 7" fill="none" stroke="#f9dedc" stroke-width="2"></path></svg>
<svg class="abs" style="left:453px;top:676px" width="24" height="24" viewBox="0 0 24 24"><path d="M10.300 6 A2.400 2.400 0 0 1 15.100 6 V11.500 A2.400 2.400 0 0 1 10.300 11.500Z" fill="none" stroke="#601410" stroke-width="1.800"></path><path d="M6.300 11.300 A6.200 6.200 0 0 0 18.700 11.300 M12.500 17.500 V21" fill="none" stroke="#601410" stroke-width="1.800"></path><path d="M3.300 2.200 L21.800 20.500" stroke="#f9dedc" stroke-width="2.200"></path><path d="M2 3.400 L20.500 21.700" stroke="#601410" stroke-width="1.800"></path></svg>
<!-- cam group -->
<div class="abs" style="left:497px;top:664px;width:88px;height:48px;border-radius:13px;background:#601410"></div>
<div class="abs" style="left:537px;top:664px;width:48px;height:48px;border-radius:13px;background:#f9dedc"></div>
<svg class="abs" style="left:514px;top:684px" width="12" height="8" viewBox="0 0 12 8"><path d="M1 7 L6 2 L11 7" fill="none" stroke="#f9dedc" stroke-width="2"></path></svg>
<svg class="abs" style="left:549px;top:676px" width="24" height="24" viewBox="0 0 24 24"><rect x="3.400" y="5.400" width="13.800" height="12.600" fill="none" stroke="#601410" stroke-width="1.800"></rect><path d="M17 10.300 L21.800 6.500 V17 L17 13.400Z" fill="#601410"></path><path d="M2.300 1.600 L22.700 21.400" stroke="#f9dedc" stroke-width="2.200"></path><path d="M1 2.800 L21.400 22.600" stroke="#601410" stroke-width="1.800"></path></svg>
<!-- present -->
<div class="abs cbtn" style="left:593px;width:56px"></div>
<svg class="abs" style="left:609px;top:677px" width="24" height="22" viewBox="0 0 24 22"><rect x="3" y="2.500" width="18" height="13" rx="1" fill="none" stroke="#e3e3e3" stroke-width="1.800"></rect><path d="M0.500 19.500 H23.500" stroke="#e3e3e3" stroke-width="1.800"></path><path d="M12 5 L16 9 H13.200 V12.500 H10.800 V9 H8Z" fill="#e3e3e3"></path></svg>
<!-- emoji -->
<div class="abs cbtn" style="left:657px;width:56px"></div>
<svg class="abs" style="left:674px;top:677px" width="22" height="22" viewBox="0 0 22 22"><circle cx="11" cy="11" r="9.300" fill="none" stroke="#e3e3e3" stroke-width="2"></circle><circle cx="7.600" cy="8.600" r="1.400" fill="#e3e3e3"></circle><circle cx="14.400" cy="8.600" r="1.400" fill="#e3e3e3"></circle><path d="M5.800 12.300 H16.200 A5.300 5.300 0 0 1 5.800 12.300Z" fill="#e3e3e3"></path></svg>
<!-- cc -->
<div class="abs cbtn" style="left:721px;width:56px"></div>
<svg class="abs" style="left:738px;top:679px" width="22" height="18" viewBox="0 0 22 18"><rect x="2" y="1.500" width="18" height="15" rx="1" fill="none" stroke="#e3e3e3" stroke-width="1.900"></rect><path d="M9.800 7.600 V6.800 H6 V11.200 H9.800 V10.400 M16 7.600 V6.800 H12.200 V11.200 H16 V10.400" fill="none" stroke="#e3e3e3" stroke-width="1.600"></path></svg>
<!-- hand -->
<div class="abs cbtn" style="left:785px;width:56px"></div>
<svg class="abs" style="left:802px;top:676px" width="22" height="24" viewBox="0 0 22 24"><path d="M7.300 12 V4.500 M10.600 11 V2.800 M13.900 11 V3.200 M17.200 12.500 V5.500" stroke="#e3e3e3" stroke-width="2.100" stroke-linecap="round" fill="none"></path><path d="M6.300 11.500 V15.500 L3.200 12.300 Q2 11.600 1.600 13 Q4 18 6.500 20.300 Q9 22.300 12.500 22 Q18.200 21.500 18.200 15 V11.500" fill="none" stroke="#e3e3e3" stroke-width="2"></path></svg>
<!-- more -->
<div class="abs cbtn" style="left:849px;width:36px"></div>
<svg class="abs" style="left:865px;top:679px" width="4" height="18" viewBox="0 0 4 18"><circle cx="2" cy="2.200" r="2" fill="#e3e3e3"></circle><circle cx="2" cy="9" r="2" fill="#e3e3e3"></circle><circle cx="2" cy="15.800" r="2" fill="#e3e3e3"></circle></svg>
<!-- end call -->
<div class="abs" style="left:893px;top:664px;width:72px;height:48px;border-radius:24px;background:#dc362e"></div>
<svg class="abs" style="left:916px;top:682px" width="26" height="12" viewBox="0 0 26 12"><path d="M13 1 Q20 1 24.800 5.600 Q25.400 6.300 24.800 7 L22.300 9.600 Q21.700 10.100 21 9.700 L18 7.700 Q17.500 7.300 17.500 6.700 V4.500 Q13 3.200 8.500 4.500 V6.700 Q8.500 7.300 8 7.700 L5 9.700 Q4.300 10.100 3.700 9.600 L1.200 7 Q0.600 6.300 1.200 5.600 Q6 1 13 1Z" fill="#fff"></path></svg>
<!-- right icons -->
<svg class="abs" style="left:1174px;top:677px" width="23" height="23" viewBox="0 0 23 23"><circle cx="11.500" cy="11.500" r="9.700" fill="none" stroke="#fff" stroke-width="2"></circle><rect x="10.400" y="10" width="2.200" height="6.500" fill="#fff"></rect><rect x="10.400" y="6.300" width="2.200" height="2.200" fill="#fff"></rect></svg>
<svg class="abs" style="left:1222px;top:679px" width="24" height="18" viewBox="0 0 24 18"><circle cx="9" cy="5" r="3.200" fill="none" stroke="#fff" stroke-width="2"></circle><path d="M1.500 16.500 V15 Q1.500 11.500 9 11.500 Q16.500 11.500 16.500 15 V16.500Z" fill="none" stroke="#fff" stroke-width="2"></path><path d="M14.500 0.900 A4.200 4.200 0 0 1 14.500 9.100 Q16.200 7.500 16.200 5 Q16.200 2.500 14.500 0.900Z M17.500 10.700 Q23.500 11.500 23.500 15 V17.500 H19.300 V15 Q19.300 12.300 17.500 10.700Z" fill="#fff"></path></svg>
<div class="abs" style="left:1235px;top:655px;width:28px;height:20px;border-radius:10px;background:#55585c;color:#fff;font-size:12.500px;font-weight:bold;line-height:20px;text-align:center">38</div>
<svg class="abs" style="left:1271px;top:678px" width="22" height="22" viewBox="0 0 22 22"><path d="M2.500 1.500 H19.500 Q20.500 1.500 20.500 2.500 V15 Q20.500 16 19.500 16 H5.800 L1.500 20 V2.500 Q1.500 1.500 2.500 1.500Z" fill="none" stroke="#fff" stroke-width="2" stroke-linejoin="round"></path><path d="M5 5.800 H17 M5 8.800 H17 M5 11.800 H13.500" stroke="#fff" stroke-width="1.500"></path></svg>
<svg class="abs" style="left:1321px;top:679px" width="18" height="18" viewBox="0 0 18 18"><g fill="#fff"><circle cx="2.3" cy="2.3" r="2.300"></circle><circle cx="9" cy="2.3" r="2.300"></circle><circle cx="15.7" cy="2.3" r="2.300"></circle><circle cx="2.3" cy="9" r="2.300"></circle><circle cx="9" cy="9" r="2.300"></circle><circle cx="15.7" cy="9" r="2.300"></circle><circle cx="2.3" cy="15.7" r="2.300"></circle><circle cx="9" cy="15.7" r="2.300"></circle><circle cx="15.7" cy="15.7" r="2.300"></circle></g></svg>
<!--CONTROLS-END-->

<!-- ================= TASKBAR ================= -->
<div id="taskbar" class="abs"></div>
<!-- start -->
<svg class="abs" style="left:16px;top:740px" width="16" height="16" viewBox="0 0 16 16"><path d="M0 2.300 L6.500 1.400 V7.600 H0Z M7.400 1.300 L16 0 V7.600 H7.400Z M0 8.400 H6.500 V14.600 L0 13.700Z M7.400 8.400 H16 V16 L7.400 14.700Z" fill="#fff"></path></svg>
<!-- search box -->
<div class="abs" style="left:48px;top:729px;width:288px;height:39px;background:#f3f3f3;border:1px solid #dadada"></div>
<svg class="abs" style="left:59px;top:739px" width="18" height="18" viewBox="0 0 18 18"><circle cx="10.500" cy="7" r="5.300" fill="none" stroke="#222" stroke-width="1.300"></circle><path d="M6.700 11 L1 17" stroke="#222" stroke-width="1.400"></path></svg>
<div class="abs" style="left: 88.5px; top: 739px; font-size: 15px; line-height: 18px; color: rgb(59, 59, 59); white-space: nowrap; letter-spacing: -0.24px;">Type here to search</div>
<svg class="abs" style="left:263px;top:734px" width="66" height="28" viewBox="0 0 66 28"><path d="M26 2 Q27 11 36 13 Q27 15 26 24 Q25 15 16 13 Q25 11 26 2Z" fill="#f9c513"></path><path d="M47 14 Q47.500 19 52 20 Q47.500 21 47 26 Q46.500 21 42 20 Q46.500 19 47 14Z" fill="#f9c513"></path><path d="M6 19 Q6.400 22.500 10 23 Q6.400 23.500 6 27 Q5.600 23.500 2 23 Q5.600 22.500 6 19Z" fill="#1e88e5"></path><circle cx="41" cy="5" r="1.500" fill="#e55b2d"></circle><circle cx="60" cy="25" r="1.600" fill="#43a047"></circle></svg>
<!-- task view -->
<svg class="abs" style="left:350px;top:739px" width="19" height="17" viewBox="0 0 19 17"><rect x="2.600" y="4.600" width="9.800" height="8.800" fill="none" stroke="#fff" stroke-width="1.200"></rect><path d="M2 1.600 H13 M2 16.400 H13 M15.600 1 V16.500 M15.600 5 H18 M15.600 12.500 H18 M18 1 V3 M18 14.500 V16.500" stroke="#fff" stroke-width="1.200" fill="none"></path></svg>
<!-- edge -->
<svg class="abs" style="left:398px;top:735px" width="26" height="26" viewBox="0 0 26 26"><defs><linearGradient id="edg" x1="0" y1="0" x2="1" y2="1"><stop offset="0" stop-color="#35c1f1"></stop><stop offset=".5" stop-color="#1b9de2"></stop><stop offset="1" stop-color="#0c59a4"></stop></linearGradient><linearGradient id="edg2" x1="0" y1="0" x2="1" y2="0"><stop offset="0" stop-color="#2cc3b0"></stop><stop offset="1" stop-color="#7bdc4a"></stop></linearGradient></defs><circle cx="13" cy="13" r="12" fill="url(#edg)"></circle><path d="M1.200 11 Q3 1.500 13 1 Q23 1 25 11 Q25 16 20 16 H15 Q15.500 13 14 11 Q11 8 7 10 Q3 12 3.500 18 Q1 15 1.200 11Z" fill="url(#edg2)"></path><path d="M3.500 18 Q3 11.500 8.500 10 Q12 9.500 13.500 12 Q11 12.500 10.500 16 Q10.500 21 16 23 Q20 24 23 20 Q20 25.500 13 25 Q6 24.500 3.500 18Z" fill="#0b4f94"></path></svg>
<!-- explorer -->
<svg class="abs" style="left:447px;top:737px" width="24" height="21" viewBox="0 0 24 21"><path d="M1 2 Q1 1 2 1 H8 L10 3 H21 Q22 3 22 4 V7 H1Z" fill="#e9a825"></path><path d="M1 5 H22.500 Q23.500 5 23.500 6 V17.500 Q23.500 18.500 22.500 18.500 H1.500 Q0.500 18.500 0.500 17.500Z" fill="#fbd666"></path><path d="M6 12 H18 V20.500 H15 V15 H9 V20.500 H6Z" fill="#2d8fe0"></path></svg>
<div class="abs" style="left:440px;top:766px;width:40px;height:2px;background:#76b9ed"></div>
<!-- store -->
<svg class="abs" style="left:496px;top:735px" width="24" height="25" viewBox="0 0 24 25"><path d="M7.500 7 V4.500 Q7.500 1.500 12 1.500 Q16.500 1.500 16.500 4.500 V7" fill="none" stroke="#2aa7e8" stroke-width="1.700"></path><rect x="0.500" y="6.500" width="23" height="18" rx="2.500" fill="#f4f4f4"></rect><rect x="7" y="10.500" width="4.500" height="4.500" fill="#f25022"></rect><rect x="12.500" y="10.500" width="4.500" height="4.500" fill="#7fba00"></rect><rect x="7" y="16" width="4.500" height="4.500" fill="#00a4ef"></rect><rect x="12.500" y="16" width="4.500" height="4.500" fill="#ffb900"></rect></svg>
<!-- mail -->
<svg class="abs" style="left:545px;top:736px" width="25" height="23" viewBox="0 0 25 23"><path d="M0.500 8 L12.500 0.500 L24.500 8 V22 H0.500Z" fill="#1565c0"></path><path d="M0.500 8 L12.500 16 L24.500 8 V22.500 H0.500Z" fill="#29a8ee"></path><path d="M0.500 22.500 L12.500 13 L24.500 22.500Z" fill="#1e88e5"></path></svg>
<!-- chrome active -->
<div class="abs" style="left:583px;top:728px;width:48px;height:40px;background:#54564b"></div>
<div class="abs" style="left:583px;top:766px;width:48px;height:2px;background:#76b9ed"></div>
<svg class="abs" style="left:594px;top:735px" width="26" height="26" viewBox="0 0 26 26"><circle cx="13" cy="13" r="12" fill="#fbbc04"></circle><path d="M13 13 L2.600 7 A12 12 0 0 1 23.400 7Z" fill="#ea4335"></path><path d="M13 13 L2.600 7 A12 12 0 0 0 11 24.800 L16 16Z" fill="#34a853"></path><path d="M2.600 7 H23.400 A12 12 0 0 0 2.600 7Z" fill="#ea4335"></path><circle cx="13" cy="13" r="5.600" fill="#fff"></circle><circle cx="13" cy="13" r="4.400" fill="#4285f4"></circle></svg>
<!-- firefox -->
<svg class="abs" style="left:642px;top:734px" width="26" height="27" viewBox="0 0 26 27"><defs><linearGradient id="ffx" x1="0.800" y1="0" x2="0.200" y2="1"><stop offset="0" stop-color="#ffd43a"></stop><stop offset=".4" stop-color="#ff980e"></stop><stop offset="1" stop-color="#e31587"></stop></linearGradient></defs><path d="M13 3 Q15 1 16 0 Q17 4 21 6.500 Q25.500 10 25 16 Q24 26.500 13 26.500 Q2 26.500 1 16 Q0.500 10 4 6 Q4 8 5 9 Q7 4 13 3Z" fill="url(#ffx)"></path><circle cx="13" cy="15.500" r="6.300" fill="#7542e5"></circle><path d="M6 12 Q9 8 14 9.500 Q11 10.500 11 13 Q13 12.500 14.500 14 Q11 14 10 17 Q7 16 6 12Z" fill="#ff9a1c"></path></svg>
<!-- whatsapp -->
<svg class="abs" style="left:692px;top:736px" width="25" height="25" viewBox="0 0 25 25"><circle cx="12.500" cy="12.500" r="12" fill="#fff"></circle><circle cx="12.700" cy="12.300" r="7.800" fill="none" stroke="#25d366" stroke-width="1.700"></circle><path d="M4 21 L5.800 15.500 L9.500 19.500Z" fill="#25d366"></path><path d="M10 8 C9.300 8 8.500 8.800 8.500 10 C8.500 12.800 12 16.500 14.800 16.500 C16 16.500 16.800 15.700 16.800 15 C16.800 14.600 15.200 13.700 14.800 13.700 C14.400 13.700 14.100 14.500 13.700 14.500 C13 14.500 10.800 12.300 10.800 11.600 C10.800 11.200 11.500 10.900 11.500 10.400 C11.500 10 10.600 8 10 8Z" fill="#25d366"></path></svg>
<!-- discord -->
<svg class="abs" style="left:740px;top:735px" width="28" height="28" viewBox="0 0 28 28"><circle cx="13" cy="13" r="12" fill="#5865f2"></circle><path d="M7 8.500 Q10 7 13 7.200 Q16 7 19 8.500 Q21.500 13 21 18 Q19 19.500 17 20 L16 18.200 Q13 19 10 18.200 L9 20 Q7 19.500 5 18 Q4.500 13 7 8.500Z" fill="#fff"></path><ellipse cx="10.300" cy="14" rx="1.600" ry="1.900" fill="#5865f2"></ellipse><ellipse cx="15.700" cy="14" rx="1.600" ry="1.900" fill="#5865f2"></ellipse><circle cx="21" cy="21" r="6" fill="#fff"></circle><circle cx="21" cy="21" r="4.300" fill="#f23f42"></circle></svg>
<div class="abs" style="left:734px;top:766px;width:40px;height:2px;background:#76b9ed"></div>
<!-- settings -->
<svg class="abs" style="left:791px;top:737px" width="22" height="22" viewBox="0 0 22 22"><g transform="translate(11 11)"><circle r="5.500" fill="none" stroke="#fff" stroke-width="3.200"></circle><g fill="#fff"><rect x="-2" y="-10.500" width="4" height="5" rx=".8"></rect><rect x="-2" y="5.500" width="4" height="5" rx=".8"></rect><rect x="-10.500" y="-2" width="5" height="4" rx=".8"></rect><rect x="5.500" y="-2" width="5" height="4" rx=".8"></rect><g transform="rotate(45)"><rect x="-2" y="-10.500" width="4" height="5" rx=".8"></rect><rect x="-2" y="5.500" width="4" height="5" rx=".8"></rect><rect x="-10.500" y="-2" width="5" height="4" rx=".8"></rect><rect x="5.500" y="-2" width="5" height="4" rx=".8"></rect></g></g></g></svg>
<div class="abs" style="left:783px;top:766px;width:40px;height:2px;background:#76b9ed"></div>
<!-- weather -->
<svg class="abs" style="left:976px;top:735px" width="26" height="24" viewBox="0 0 26 24"><circle cx="10.500" cy="13" r="9.500" fill="#f7a21b"></circle><path d="M10 21 Q7 21 7 18.500 Q7 16 10 16 Q11 12.500 14.500 13 Q17.500 13 18.500 16 Q22 16 22 18.500 Q22 21 19 21Z" fill="#c9d7e8"></path><circle cx="17.500" cy="6.500" r="5.500" fill="#d93025"></circle><text x="17.500" y="9.500" text-anchor="middle" font-family="Liberation Sans,sans-serif" font-size="8" fill="#fff">1</text></svg>
<div class="abs" style="left: 1006.5px; top: 739px; font-size: 14px; line-height: 18px; color: rgb(255, 255, 255); white-space: pre; letter-spacing: -0.29px;">31°C  Cerah</div>
<!-- tray -->
<svg class="abs" style="left:1104px;top:743px" width="14" height="9" viewBox="0 0 14 9"><path d="M1 8 L7 1.500 L13 8" fill="none" stroke="#fff" stroke-width="1.300"></path></svg>
<svg class="abs" style="left:1129px;top:740px" width="13" height="16" viewBox="0 0 13 16"><path d="M3 2 V1 H10 V2 M3 14 V15 H10 V14" fill="none" stroke="#fff" stroke-width="1"></path><rect x="1" y="5" width="7" height="6" rx="1" fill="none" stroke="#fff" stroke-width="1"></rect><path d="M8 7.500 L11.500 5.500 V10.500 L8 8.500" fill="none" stroke="#fff" stroke-width="1"></path></svg>
<svg class="abs" style="left:1151px;top:739px" width="18" height="18" viewBox="0 0 18 18"><rect x="0.600" y="1.600" width="14" height="13" fill="none" stroke="#fff" stroke-width="1.100"></rect><path d="M3.500 11.500 V6 Q5 4 7 6 L9 8 L11.500 5.500 M11.500 8 V5.500 H9" fill="none" stroke="#fff" stroke-width="1.100"></path><circle cx="13.500" cy="13.500" r="3.800" fill="#e81123"></circle></svg>
<svg class="abs" style="left:1174px;top:741px" width="18" height="14" viewBox="0 0 18 14"><rect x="4.500" y="3.500" width="12" height="8" fill="none" stroke="#fff" stroke-width="1.100"></rect><rect x="6" y="5" width="9" height="5" fill="#fff"></rect><path d="M16.500 6 H17.800 V9 H16.500" fill="#fff"></path><path d="M0 3 H3 M0 6 H3 M3 1.500 V7.500 Q5.500 7.500 5.500 4.500 Q5.500 1.500 3 1.500Z M5.500 4.500 H7 V12" fill="none" stroke="#fff" stroke-width="1"></path></svg>
<svg class="abs" style="left:1201px;top:739px" width="12" height="18" viewBox="0 0 12 18"><rect x="3.300" y="0.500" width="5.400" height="10.500" rx="2.700" fill="#fff"></rect><path d="M1 8 Q1 13 6 13 Q11 13 11 8 M6 13 V16.500 M3 17 H9" fill="none" stroke="#fff" stroke-width="1.100"></path></svg>
<svg class="abs" style="left:1223px;top:740px" width="17" height="16" viewBox="0 0 17 16"><path d="M12.500 15 A3.500 3.500 0 0 1 16 11.500 M9 15 A7 7 0 0 1 16 8" fill="none" stroke="#fff" stroke-width="1.300"></path><path d="M5.500 15 A10.500 10.500 0 0 1 16 4.500 M2 15 A14 14 0 0 1 16 1" fill="none" stroke="#8f9088" stroke-width="1.300"></path><circle cx="15.300" cy="14.300" r="1.300" fill="#fff"></circle></svg>
<div class="abs" style="left: 1263px; top: 731px; font-size: 12px; line-height: 16px; color: rgb(255, 255, 255); white-space: nowrap; letter-spacing: -0.21px;">10:46</div>
<div class="abs" style="left: 1248px; top: 749px; font-size: 12px; line-height: 16px; color: rgb(255, 255, 255); white-space: nowrap; letter-spacing: -0.11px;">04/09/2025</div>
<svg class="abs" style="left:1324px;top:738px" width="26" height="26" viewBox="0 0 26 26"><path d="M0.500 1.500 H17 V14 H5 L0.500 18Z" fill="#fff"></path><path d="M3 5 H14.500 M3 7.800 H14.500 M3 10.600 H11" stroke="#34352a" stroke-width="1.100"></path><circle cx="17" cy="17" r="7.300" fill="#2a2b24" stroke="#8a8b84" stroke-width="1"></circle><text x="17" y="21" text-anchor="middle" font-family="Liberation Sans,sans-serif" font-size="11" fill="#fff">1</text></svg>
<div class="abs" style="left:1361px;top:728px;width:1px;height:40px;background:#6d6f66"></div>
<!--TASKBAR-DETAIL-END-->

</div>


</body></html>
